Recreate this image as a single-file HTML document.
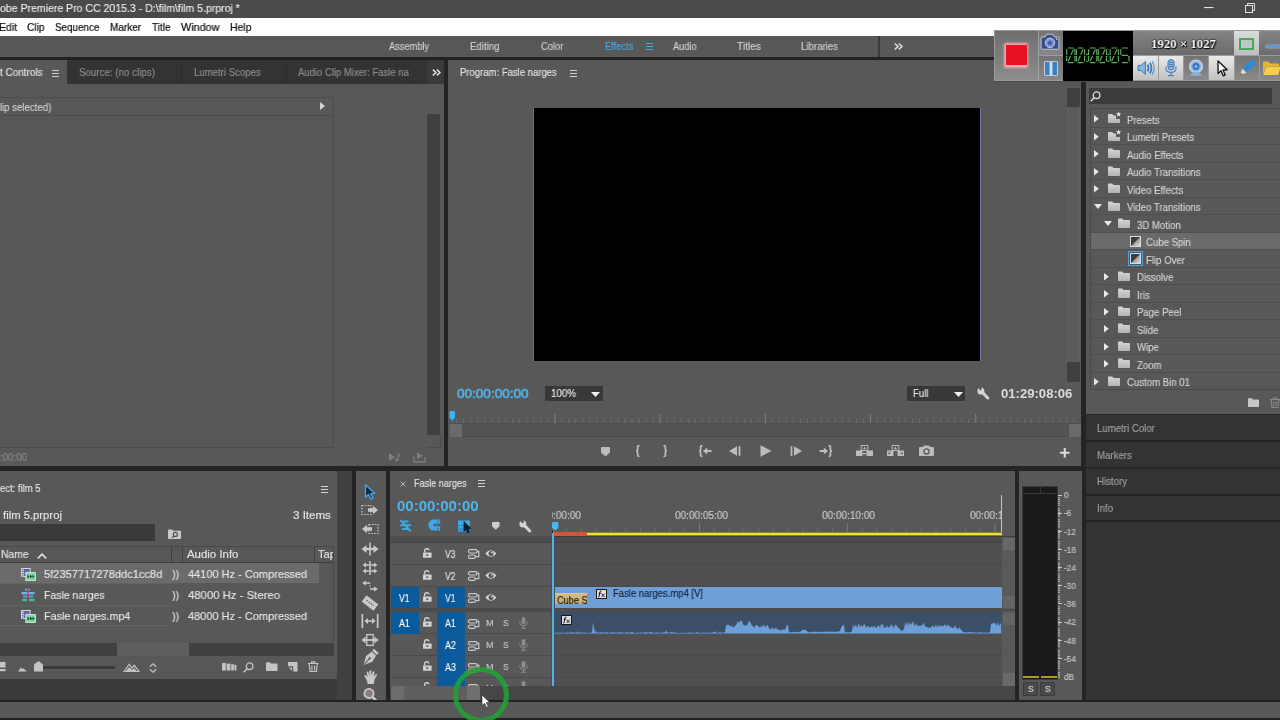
<!DOCTYPE html>
<html>
<head>
<meta charset="utf-8">
<title>Premiere</title>
<style>
html,body{margin:0;padding:0;}
body{width:1280px;height:720px;overflow:hidden;position:relative;background:#242424;font-family:"Liberation Sans",sans-serif;font-size:10px;color:#d4d4d4;}
div,svg{position:absolute;box-sizing:border-box;}
svg{overflow:visible;}
.t{white-space:pre;line-height:1;transform-origin:0 50%;will-change:transform;}
</style>
</head>
<body>
<svg width="0" height="0" style="left:0;top:0;"><defs><linearGradient id="fg" x1="0" y1="0" x2="0" y2="1"><stop offset="0" stop-color="#d6d6d6"/><stop offset="1" stop-color="#b4b4b4"/></linearGradient><linearGradient id="tg" x1="0" y1="0" x2="1" y2="1"><stop offset=".4" stop-color="#8a8a8a"/><stop offset="1" stop-color="#e0e0e0"/></linearGradient></defs></svg>
<div style="left:0px;top:0px;width:1280px;height:18px;background:#4b4a48;"></div>
<div class="t" style="left:-0.3px;top:2px;font-size:11px;line-height:12px;color:#ececec;transform:scaleX(0.957);-webkit-text-stroke:0.15px #ececec;">obe Premiere Pro CC 2015.3 - D:\film\film 5.prproj *</div>
<svg style="left:1204px;top:7px;" width="9.5" height="2" viewBox="0 0 9.5 2"><rect width="9.5" height="1.1" fill="#e4e4e4"/></svg>
<svg style="left:1244.5px;top:2.7px;" width="10" height="10" viewBox="0 0 10 10"><rect x="0.5" y="2.5" width="7" height="7" fill="none" stroke="#e0e0e0" stroke-width="1"/><path d="M2.5 2.5V0.5H9.5V7.5H7.5" fill="none" stroke="#e0e0e0" stroke-width="1"/></svg>
<div style="left:0px;top:18px;width:1280px;height:18px;background:#ffffff;"></div>
<div class="t" style="left:-1.2px;top:21px;font-size:11px;line-height:12px;color:#0c0c0c;transform:scaleX(0.955);-webkit-text-stroke:0.2px #0c0c0c;">Edit</div>
<div class="t" style="left:27px;top:21px;font-size:11px;line-height:12px;color:#0c0c0c;transform:scaleX(0.924);-webkit-text-stroke:0.2px #0c0c0c;">Clip</div>
<div class="t" style="left:55.2px;top:21px;font-size:11px;line-height:12px;color:#0c0c0c;transform:scaleX(0.894);-webkit-text-stroke:0.2px #0c0c0c;">Sequence</div>
<div class="t" style="left:109.7px;top:21px;font-size:11px;line-height:12px;color:#0c0c0c;transform:scaleX(0.909);-webkit-text-stroke:0.2px #0c0c0c;">Marker</div>
<div class="t" style="left:152px;top:21px;font-size:11px;line-height:12px;color:#0c0c0c;transform:scaleX(0.913);-webkit-text-stroke:0.2px #0c0c0c;">Title</div>
<div class="t" style="left:181.4px;top:21px;font-size:11px;line-height:12px;color:#0c0c0c;transform:scaleX(0.982);-webkit-text-stroke:0.2px #0c0c0c;">Window</div>
<div class="t" style="left:230px;top:21px;font-size:11px;line-height:12px;color:#0c0c0c;transform:scaleX(0.95);-webkit-text-stroke:0.2px #0c0c0c;">Help</div>
<div style="left:0px;top:36px;width:1280px;height:21px;background:#585858;"></div>
<div style="left:0px;top:57px;width:1280px;height:3px;background:#222222;"></div>
<div class="t" style="left:388.7px;top:41px;font-size:10.3px;line-height:11px;color:#d0d0d0;transform:scaleX(0.896);-webkit-text-stroke:0.15px #d0d0d0;">Assembly</div>
<div class="t" style="left:469.5px;top:41px;font-size:10.3px;line-height:11px;color:#d0d0d0;transform:scaleX(0.937);-webkit-text-stroke:0.15px #d0d0d0;">Editing</div>
<div class="t" style="left:540.7px;top:41px;font-size:10.3px;line-height:11px;color:#d0d0d0;transform:scaleX(0.902);-webkit-text-stroke:0.15px #d0d0d0;">Color</div>
<div class="t" style="left:604.5px;top:41px;font-size:10.3px;line-height:11px;color:#4da6dc;transform:scaleX(0.901);-webkit-text-stroke:0.15px #4da6dc;">Effects</div>
<div class="t" style="left:672.5px;top:41px;font-size:10.3px;line-height:11px;color:#d0d0d0;transform:scaleX(0.9);-webkit-text-stroke:0.15px #d0d0d0;">Audio</div>
<div class="t" style="left:737px;top:41px;font-size:10.3px;line-height:11px;color:#d0d0d0;transform:scaleX(0.991);-webkit-text-stroke:0.15px #d0d0d0;">Titles</div>
<div class="t" style="left:800.5px;top:41px;font-size:10.3px;line-height:11px;color:#d0d0d0;transform:scaleX(0.937);-webkit-text-stroke:0.15px #d0d0d0;">Libraries</div>
<svg style="left:645.5px;top:43px;" width="7" height="8" viewBox="0 0 7 8"><path d="M0 .5H7M0 3.5H7M0 6.5H7" stroke="#4da6dc" stroke-width="1"/></svg>
<div style="left:878.4px;top:36px;width:1.6px;height:21px;background:#3c3c3c;"></div>
<svg style="left:893.6px;top:42.6px;" width="9" height="7" viewBox="0 0 9 7"><path d="M.8 .6L4 3.5L.8 6.4M4.8 .6L8 3.5L4.8 6.4" fill="none" stroke="#dcdcdc" stroke-width="1.5"/></svg>
<div style="left:0px;top:60px;width:444px;height:406px;background:#585858;"></div>
<div style="left:67px;top:60px;width:360px;height:24px;background:#333333;border-top-left-radius:2px;"></div>
<div style="left:427px;top:60px;width:17px;height:24px;background:#3a3a3a;"></div>
<div style="left:286px;top:61px;width:1px;height:23px;background:#2c2c2c;"></div>
<div style="left:181px;top:61px;width:1px;height:23px;background:#2c2c2c;"></div>
<div style="left:409px;top:61px;width:1px;height:23px;background:#2c2c2c;"></div>
<div class="t" style="left:0px;top:67px;font-size:10.3px;line-height:11px;color:#e2e2e2;transform:scaleX(0.964);-webkit-text-stroke:0.15px #e2e2e2;">t Controls</div>
<svg style="left:52px;top:69.5px;" width="7" height="8" viewBox="0 0 7 8"><path d="M0 .5H7M0 3.5H7M0 6.5H7" stroke="#d0d0d0" stroke-width="1"/></svg>
<div class="t" style="left:79px;top:67px;font-size:10.3px;line-height:11px;color:#8e8e8e;transform:scaleX(0.947);-webkit-text-stroke:0.15px #8e8e8e;">Source: (no clips)</div>
<div class="t" style="left:194px;top:67px;font-size:10.3px;line-height:11px;color:#8e8e8e;transform:scaleX(0.932);-webkit-text-stroke:0.15px #8e8e8e;">Lumetri Scopes</div>
<div class="t" style="left:298px;top:67px;font-size:10.3px;line-height:11px;color:#8e8e8e;transform:scaleX(0.922);-webkit-text-stroke:0.15px #8e8e8e;">Audio Clip Mixer: Fasle na</div>
<svg style="left:432px;top:69px;" width="9" height="7" viewBox="0 0 9 7"><path d="M.8 .6L4 3.5L.8 6.4M4.8 .6L8 3.5L4.8 6.4" fill="none" stroke="#dcdcdc" stroke-width="1.5"/></svg>
<div style="left:0px;top:97px;width:334px;height:1px;background:#4c4c4c;"></div>
<div style="left:0px;top:115px;width:334px;height:1px;background:#4c4c4c;"></div>
<div style="left:333px;top:97px;width:1px;height:351px;background:#4c4c4c;"></div>
<div style="left:0px;top:447px;width:334px;height:1px;background:#4c4c4c;"></div>
<div class="t" style="left:-5.3px;top:102px;font-size:10.3px;line-height:11px;color:#d2d2d2;transform:scaleX(0.937);-webkit-text-stroke:0.15px #d2d2d2;">clip selected)</div>
<svg style="left:320.3px;top:101.7px;" width="5" height="8" viewBox="0 0 5 8"><path d="M0 0L5 4L0 8Z" fill="#d6d6d6"/></svg>
<div style="left:427px;top:114px;width:13px;height:321px;background:#404040;"></div>
<div style="left:427px;top:435px;width:14px;height:13px;background:none;border-right:1px solid #4c4c4c;border-bottom:1px solid #4c4c4c;"></div>
<svg style="left:389px;top:452px;" width="13" height="10" viewBox="0 0 13 10"><path d="M0 1L6 5L0 9Z" fill="#7e7e7e"/><path d="M9 1.5V8" stroke="#7e7e7e" stroke-width="1.2"/><ellipse cx="7.6" cy="8" rx="1.8" ry="1.4" fill="#7e7e7e"/><path d="M9 1.5Q11.5 2.5 11 5" fill="none" stroke="#7e7e7e" stroke-width="1"/></svg>
<svg style="left:413px;top:452px;" width="13" height="11" viewBox="0 0 13 11"><path d="M1 4.5V10H12V5.5" fill="none" stroke="#7e7e7e" stroke-width="1.4"/><path d="M4 0.5L10 4L4 7Z" fill="#7e7e7e"/></svg>
<div class="t" style="left:0.3px;top:452px;font-size:10.3px;line-height:11px;color:#8c8c8c;transform:scaleX(0.943);-webkit-text-stroke:0.15px #8c8c8c;">:00:00</div>
<div style="left:444px;top:60px;width:4px;height:406px;background:#242424;"></div>
<div style="left:0px;top:466px;width:1086px;height:5px;background:#242424;"></div>
<div style="left:448px;top:60px;width:634px;height:406px;background:#585858;"></div>
<div class="t" style="left:459.7px;top:67px;font-size:10.3px;line-height:11px;color:#e2e2e2;transform:scaleX(0.924);-webkit-text-stroke:0.15px #e2e2e2;">Program: Fasle narges</div>
<svg style="left:569.5px;top:69.5px;" width="7" height="8" viewBox="0 0 7 8"><path d="M0 .5H7M0 3.5H7M0 6.5H7" stroke="#d0d0d0" stroke-width="1"/></svg>
<div style="left:534px;top:108px;width:447px;height:253px;background:#000000;"></div>
<div style="left:533px;top:108px;width:1px;height:253px;background:#6f6f8e;"></div>
<div style="left:980px;top:108px;width:1px;height:253px;background:#7474a0;"></div>
<div style="left:1066.5px;top:88px;width:13.5px;height:294px;background:#5b5b5b;border:1px solid #626262;"></div>
<div style="left:1066.5px;top:88px;width:13.5px;height:18.5px;background:#404040;"></div>
<div style="left:1066.5px;top:362px;width:13.5px;height:20px;background:#404040;"></div>
<div class="t" style="left:456.9px;top:386px;font-size:13.55px;line-height:15px;color:#4fb4ea;-webkit-text-stroke:0.6px #4fb4ea;">00:00:00:00</div>
<div style="left:545px;top:386px;width:58px;height:15px;background:#383838;"></div>
<div class="t" style="left:551px;top:387px;font-size:10.8px;line-height:12px;color:#e6e6e6;transform:scaleX(0.905);-webkit-text-stroke:0.15px #e6e6e6;">100%</div>
<svg style="left:591px;top:392px;" width="9" height="5" viewBox="0 0 9 5"><path d="M0 0H9L4.5 5Z" fill="#f0f0f0"/></svg>
<div style="left:907px;top:386px;width:58px;height:15px;background:#383838;"></div>
<div class="t" style="left:913.4px;top:387px;font-size:10.8px;line-height:12px;color:#e6e6e6;transform:scaleX(0.896);-webkit-text-stroke:0.15px #e6e6e6;">Full</div>
<svg style="left:953.5px;top:392px;" width="9" height="5" viewBox="0 0 9 5"><path d="M0 0H9L4.5 5Z" fill="#f0f0f0"/></svg>
<svg style="left:976.6px;top:387px;" width="13" height="13" viewBox="0 0 13 13"><path d="M4.4 4.4L10.8 11" stroke="#d4d4d4" stroke-width="3" stroke-linecap="round"/><circle cx="3.9" cy="3.9" r="3.5" fill="#d4d4d4"/><path d="M3.6 3.6L.6 .2L3.2 -1.2L5 1.8Z" fill="#585858"/></svg>
<div class="t" style="left:1000.6px;top:386px;font-size:13.1px;line-height:15px;color:#dcdcdc;font-weight:bold;">01:29:08:06</div>
<svg style="left:449px;top:413px;" width="632" height="11" viewBox="0 0 632 11"><rect x="7.2" y="6" width="1" height="4" fill="#6e6e6e"/><rect x="14.2" y="6" width="1" height="4" fill="#6e6e6e"/><rect x="21.2" y="6" width="1" height="4" fill="#6e6e6e"/><rect x="28.2" y="6" width="1" height="4" fill="#6e6e6e"/><rect x="35.3" y="6" width="1" height="4" fill="#6e6e6e"/><rect x="42.3" y="6" width="1" height="4" fill="#6e6e6e"/><rect x="49.3" y="6" width="1" height="4" fill="#6e6e6e"/><rect x="56.3" y="6" width="1" height="4" fill="#6e6e6e"/><rect x="63.3" y="6" width="1" height="4" fill="#6e6e6e"/><rect x="70.3" y="6" width="1" height="4" fill="#6e6e6e"/><rect x="77.3" y="6" width="1" height="4" fill="#6e6e6e"/><rect x="84.3" y="6" width="1" height="4" fill="#6e6e6e"/><rect x="91.4" y="6" width="1" height="4" fill="#6e6e6e"/><rect x="98.4" y="6" width="1" height="4" fill="#6e6e6e"/><rect x="105.4" y="6" width="1" height="4" fill="#6e6e6e"/><rect x="112.4" y="6" width="1" height="4" fill="#6e6e6e"/><rect x="119.4" y="6" width="1" height="4" fill="#6e6e6e"/><rect x="126.4" y="6" width="1" height="4" fill="#6e6e6e"/><rect x="133.4" y="6" width="1" height="4" fill="#6e6e6e"/><rect x="140.4" y="6" width="1" height="4" fill="#6e6e6e"/><rect x="147.5" y="6" width="1" height="4" fill="#6e6e6e"/><rect x="154.5" y="6" width="1" height="4" fill="#6e6e6e"/><rect x="161.5" y="6" width="1" height="4" fill="#6e6e6e"/><rect x="168.5" y="6" width="1" height="4" fill="#6e6e6e"/><rect x="175.5" y="6" width="1" height="4" fill="#6e6e6e"/><rect x="182.5" y="6" width="1" height="4" fill="#6e6e6e"/><rect x="189.5" y="6" width="1" height="4" fill="#6e6e6e"/><rect x="196.6" y="6" width="1" height="4" fill="#6e6e6e"/><rect x="203.6" y="6" width="1" height="4" fill="#6e6e6e"/><rect x="210.6" y="6" width="1" height="4" fill="#6e6e6e"/><rect x="217.6" y="6" width="1" height="4" fill="#6e6e6e"/><rect x="224.6" y="6" width="1" height="4" fill="#6e6e6e"/><rect x="231.6" y="6" width="1" height="4" fill="#6e6e6e"/><rect x="238.6" y="6" width="1" height="4" fill="#6e6e6e"/><rect x="245.6" y="6" width="1" height="4" fill="#6e6e6e"/><rect x="252.7" y="6" width="1" height="4" fill="#6e6e6e"/><rect x="259.7" y="6" width="1" height="4" fill="#6e6e6e"/><rect x="266.7" y="6" width="1" height="4" fill="#6e6e6e"/><rect x="273.7" y="6" width="1" height="4" fill="#6e6e6e"/><rect x="280.7" y="6" width="1" height="4" fill="#6e6e6e"/><rect x="287.7" y="6" width="1" height="4" fill="#6e6e6e"/><rect x="294.7" y="6" width="1" height="4" fill="#6e6e6e"/><rect x="301.7" y="6" width="1" height="4" fill="#6e6e6e"/><rect x="308.8" y="6" width="1" height="4" fill="#6e6e6e"/><rect x="315.8" y="6" width="1" height="4" fill="#6e6e6e"/><rect x="322.8" y="6" width="1" height="4" fill="#6e6e6e"/><rect x="329.8" y="6" width="1" height="4" fill="#6e6e6e"/><rect x="336.8" y="6" width="1" height="4" fill="#6e6e6e"/><rect x="343.8" y="6" width="1" height="4" fill="#6e6e6e"/><rect x="350.8" y="6" width="1" height="4" fill="#6e6e6e"/><rect x="357.9" y="6" width="1" height="4" fill="#6e6e6e"/><rect x="364.9" y="6" width="1" height="4" fill="#6e6e6e"/><rect x="371.9" y="6" width="1" height="4" fill="#6e6e6e"/><rect x="378.9" y="6" width="1" height="4" fill="#6e6e6e"/><rect x="385.9" y="6" width="1" height="4" fill="#6e6e6e"/><rect x="392.9" y="6" width="1" height="4" fill="#6e6e6e"/><rect x="399.9" y="6" width="1" height="4" fill="#6e6e6e"/><rect x="406.9" y="6" width="1" height="4" fill="#6e6e6e"/><rect x="414.0" y="6" width="1" height="4" fill="#6e6e6e"/><rect x="421.0" y="6" width="1" height="4" fill="#6e6e6e"/><rect x="428.0" y="6" width="1" height="4" fill="#6e6e6e"/><rect x="435.0" y="6" width="1" height="4" fill="#6e6e6e"/><rect x="442.0" y="6" width="1" height="4" fill="#6e6e6e"/><rect x="449.0" y="6" width="1" height="4" fill="#6e6e6e"/><rect x="456.0" y="6" width="1" height="4" fill="#6e6e6e"/><rect x="463.0" y="6" width="1" height="4" fill="#6e6e6e"/><rect x="470.1" y="6" width="1" height="4" fill="#6e6e6e"/><rect x="477.1" y="6" width="1" height="4" fill="#6e6e6e"/><rect x="484.1" y="6" width="1" height="4" fill="#6e6e6e"/><rect x="491.1" y="6" width="1" height="4" fill="#6e6e6e"/><rect x="498.1" y="6" width="1" height="4" fill="#6e6e6e"/><rect x="505.1" y="6" width="1" height="4" fill="#6e6e6e"/><rect x="512.1" y="6" width="1" height="4" fill="#6e6e6e"/><rect x="519.1" y="6" width="1" height="4" fill="#6e6e6e"/><rect x="526.2" y="6" width="1" height="4" fill="#6e6e6e"/><rect x="533.2" y="6" width="1" height="4" fill="#6e6e6e"/><rect x="540.2" y="6" width="1" height="4" fill="#6e6e6e"/><rect x="547.2" y="6" width="1" height="4" fill="#6e6e6e"/><rect x="554.2" y="6" width="1" height="4" fill="#6e6e6e"/><rect x="561.2" y="6" width="1" height="4" fill="#6e6e6e"/><rect x="568.2" y="6" width="1" height="4" fill="#6e6e6e"/><rect x="575.3" y="6" width="1" height="4" fill="#6e6e6e"/><rect x="582.3" y="6" width="1" height="4" fill="#6e6e6e"/><rect x="589.3" y="6" width="1" height="4" fill="#6e6e6e"/><rect x="596.3" y="6" width="1" height="4" fill="#6e6e6e"/><rect x="603.3" y="6" width="1" height="4" fill="#6e6e6e"/><rect x="610.3" y="6" width="1" height="4" fill="#6e6e6e"/><rect x="617.3" y="6" width="1" height="4" fill="#6e6e6e"/><rect x="624.3" y="6" width="1" height="4" fill="#6e6e6e"/><rect x="105.4" y="1" width="1" height="9" fill="#7e7e7e"/><rect x="210.6" y="1" width="1" height="9" fill="#7e7e7e"/><rect x="315.8" y="1" width="1" height="9" fill="#7e7e7e"/><rect x="421.0" y="1" width="1" height="9" fill="#7e7e7e"/><rect x="526.2" y="1" width="1" height="9" fill="#7e7e7e"/><rect x="0" y="10" width="632" height="1" fill="#4e4e4e"/></svg>
<svg style="left:449px;top:411px;" width="7" height="11" viewBox="0 0 7 11"><path d="M0.5 0.8Q0.5 0 1.3 0H5.2Q6 0 6 .8V7L3.2 9.6L0.5 7Z" fill="#3fb0f0"/><rect x="2.7" y="8" width="1" height="3" fill="#2a90d0"/></svg>
<div style="left:450px;top:424px;width:631px;height:13px;background:#545454;border-bottom:1px solid #4a4a4a;"></div>
<div style="left:450px;top:424px;width:12px;height:13px;background:#6a6a6a;"></div>
<div style="left:1069px;top:424px;width:12px;height:13px;background:#6a6a6a;"></div>
<svg style="left:600.5px;top:446.5px;" width="9" height="10" viewBox="0 0 9 10"><path d="M0 1Q0 0 1 0H8Q9 0 9 1V5.5L4.5 9.6L0 5.5Z" fill="#bcbcbc"/></svg>
<svg style="left:634.5px;top:445px;" width="5" height="12" viewBox="0 0 5 12"><path d="M4.5 .6Q2.6 .6 2.6 2V4.6Q2.6 6 1 6Q2.6 6 2.6 7.4V10Q2.6 11.4 4.5 11.4" fill="none" stroke="#bcbcbc" stroke-width="1.7"/></svg>
<svg style="left:662.5px;top:445px;" width="5" height="12" viewBox="0 0 5 12"><path d="M.5 .6Q2.4 .6 2.4 2V4.6Q2.4 6 4 6Q2.4 6 2.4 7.4V10Q2.4 11.4 .5 11.4" fill="none" stroke="#bcbcbc" stroke-width="1.7"/></svg>
<svg style="left:698px;top:445px;" width="14" height="12" viewBox="0 0 14 12"><path d="M4.5 .6Q2.6 .6 2.6 2V4.6Q2.6 6 1 6Q2.6 6 2.6 7.4V10Q2.6 11.4 4.5 11.4" fill="none" stroke="#bcbcbc" stroke-width="1.7"/><path d="M5 6L9.2 2.4V4.9H13.5V7.1H9.2V9.6Z" fill="#bcbcbc"/></svg>
<svg style="left:729px;top:445px;" width="13" height="12" viewBox="0 0 13 12"><path d="M0 6L8 1.2V10.8Z" fill="#bcbcbc"/><rect x="9.6" y="1.2" width="1.8" height="9.6" fill="#bcbcbc"/></svg>
<svg style="left:760px;top:445px;" width="12" height="12" viewBox="0 0 12 12"><path d="M0.5 0.3L11.5 6L0.5 11.7Z" fill="#bcbcbc"/></svg>
<svg style="left:790px;top:445px;" width="13" height="12" viewBox="0 0 13 12"><rect x="0.6" y="1.2" width="1.8" height="9.6" fill="#bcbcbc"/><path d="M12 6L4 1.2V10.8Z" fill="#bcbcbc"/></svg>
<svg style="left:819px;top:445px;" width="14" height="12" viewBox="0 0 14 12"><path d="M9.5 .6Q11.4 .6 11.4 2V4.6Q11.4 6 13 6Q11.4 6 11.4 7.4V10Q11.4 11.4 9.5 11.4" fill="none" stroke="#bcbcbc" stroke-width="1.7"/><path d="M9 6L4.8 2.4V4.9H.5V7.1H4.8V9.6Z" fill="#bcbcbc"/></svg>
<svg style="left:856px;top:445px;" width="17" height="12" viewBox="0 0 17 12"><rect x="0" y="5.5" width="6.5" height="5.5" fill="#bcbcbc"/><rect x="10.5" y="5.5" width="6.5" height="5.5" fill="#bcbcbc"/><rect x="5.2" y="0.5" width="6.6" height="5" fill="none" stroke="#bcbcbc" stroke-width="1"/><path d="M6.8 4.3L8.5 1.8L10.2 4.3Z" fill="#bcbcbc"/><rect x="6.5" y="8" width="4" height="1.2" fill="#bcbcbc"/></svg>
<svg style="left:887px;top:445px;" width="17" height="12" viewBox="0 0 17 12"><rect x="0" y="5.5" width="6.5" height="5.5" fill="#bcbcbc"/><rect x="10.5" y="5.5" width="6.5" height="5.5" fill="#bcbcbc"/><rect x="5.2" y="0.5" width="6.6" height="5" fill="none" stroke="#bcbcbc" stroke-width="1"/><path d="M6.8 4.3L8.5 1.8L10.2 4.3Z" fill="#bcbcbc"/><path d="M1.5 7L3.8 8.3L1.5 9.6ZM15.5 7L13.2 8.3L15.5 9.6Z" fill="#585858"/></svg>
<svg style="left:918.5px;top:445px;" width="15" height="12" viewBox="0 0 15 12"><path d="M0 3Q0 2 1 2H3.6L4.8 .4H10.2L11.4 2H14Q15 2 15 3V10Q15 11 14 11H1Q0 11 0 10Z" fill="#bcbcbc"/><circle cx="7.5" cy="6.4" r="2.6" fill="none" stroke="#585858" stroke-width="1.3"/></svg>
<svg style="left:1060px;top:447.8px;" width="9.5" height="9.5" viewBox="0 0 9.5 9.5"><path d="M4.75 0V9.5M0 4.75H9.5" stroke="#dadada" stroke-width="2.1"/></svg>
<div style="left:1081.3px;top:60px;width:4.6px;height:640px;background:#242424;"></div>
<div style="left:1086px;top:60px;width:194px;height:354px;background:#585858;"></div>
<div style="left:1089px;top:88px;width:183px;height:16px;background:#3b3b3b;"></div>
<svg style="left:1090px;top:91px;" width="11" height="11" viewBox="0 0 11 11"><circle cx="6.6" cy="4.2" r="3.3" fill="none" stroke="#d8d8d8" stroke-width="1.3"/><path d="M4.2 6.6L0.8 10.2" stroke="#d8d8d8" stroke-width="1.5"/></svg>
<div style="left:1090px;top:108px;width:190px;height:282px;background:none;border:1px solid #4a4a4a;border-right:none;"></div>
<svg style="left:1094.3px;top:115.1px;" width="5" height="8" viewBox="0 0 5 8"><path d="M0 0L4.8 3.7L0 7.4Z" fill="#e8e8e8"/></svg>
<svg style="left:1108px;top:113.4px;" width="12.5" height="11" viewBox="0 0 12.5 11"><path d="M0 1.8Q0 1 .8 1H4.2L5.6 2.6H8V6H12V9.2Q12 10 11.2 10H.8Q0 10 0 9.2Z" fill="url(#fg)"/><path d="M10.6 -1.6L11.3 .3L13.3 .4L11.7 1.6L12.3 3.6L10.6 2.4L8.9 3.6L9.5 1.6L7.9 .4L9.9 .3Z" fill="#f0f0f0"/></svg>
<div class="t" style="left:1126.7px;top:115px;font-size:10.3px;line-height:11px;color:#d4d4d4;transform:scaleX(0.932);-webkit-text-stroke:0.15px #d4d4d4;">Presets</div>
<div style="left:1091px;top:127px;width:189px;height:1px;background:#4e4e4e;"></div>
<svg style="left:1094.3px;top:132.60000000000002px;" width="5" height="8" viewBox="0 0 5 8"><path d="M0 0L4.8 3.7L0 7.4Z" fill="#e8e8e8"/></svg>
<svg style="left:1108px;top:130.9px;" width="12.5" height="11" viewBox="0 0 12.5 11"><path d="M0 1.8Q0 1 .8 1H4.2L5.6 2.6H8V6H12V9.2Q12 10 11.2 10H.8Q0 10 0 9.2Z" fill="url(#fg)"/><path d="M10.6 -1.6L11.3 .3L13.3 .4L11.7 1.6L12.3 3.6L10.6 2.4L8.9 3.6L9.5 1.6L7.9 .4L9.9 .3Z" fill="#f0f0f0"/></svg>
<div class="t" style="left:1126.7px;top:132px;font-size:10.3px;line-height:11px;color:#d4d4d4;transform:scaleX(0.932);-webkit-text-stroke:0.15px #d4d4d4;">Lumetri Presets</div>
<div style="left:1091px;top:144px;width:189px;height:1px;background:#4e4e4e;"></div>
<svg style="left:1094.3px;top:150.1px;" width="5" height="8" viewBox="0 0 5 8"><path d="M0 0L4.8 3.7L0 7.4Z" fill="#e8e8e8"/></svg>
<svg style="left:1108px;top:148.39999999999998px;" width="12.5" height="11" viewBox="0 0 12.5 11"><path d="M0 1.2Q0 .4 .8 .4H4.2L5.6 2H11.2Q12 2 12 2.8V9.2Q12 10 11.2 10H.8Q0 10 0 9.2Z" fill="url(#fg)"/></svg>
<div class="t" style="left:1126.7px;top:150px;font-size:10.3px;line-height:11px;color:#d4d4d4;transform:scaleX(0.932);-webkit-text-stroke:0.15px #d4d4d4;">Audio Effects</div>
<div style="left:1091px;top:162px;width:189px;height:1px;background:#4e4e4e;"></div>
<svg style="left:1094.3px;top:167.6px;" width="5" height="8" viewBox="0 0 5 8"><path d="M0 0L4.8 3.7L0 7.4Z" fill="#e8e8e8"/></svg>
<svg style="left:1108px;top:165.89999999999998px;" width="12.5" height="11" viewBox="0 0 12.5 11"><path d="M0 1.2Q0 .4 .8 .4H4.2L5.6 2H11.2Q12 2 12 2.8V9.2Q12 10 11.2 10H.8Q0 10 0 9.2Z" fill="url(#fg)"/></svg>
<div class="t" style="left:1126.7px;top:167px;font-size:10.3px;line-height:11px;color:#d4d4d4;transform:scaleX(0.932);-webkit-text-stroke:0.15px #d4d4d4;">Audio Transitions</div>
<div style="left:1091px;top:179px;width:189px;height:1px;background:#4e4e4e;"></div>
<svg style="left:1094.3px;top:185.1px;" width="5" height="8" viewBox="0 0 5 8"><path d="M0 0L4.8 3.7L0 7.4Z" fill="#e8e8e8"/></svg>
<svg style="left:1108px;top:183.39999999999998px;" width="12.5" height="11" viewBox="0 0 12.5 11"><path d="M0 1.2Q0 .4 .8 .4H4.2L5.6 2H11.2Q12 2 12 2.8V9.2Q12 10 11.2 10H.8Q0 10 0 9.2Z" fill="url(#fg)"/></svg>
<div class="t" style="left:1126.7px;top:185px;font-size:10.3px;line-height:11px;color:#d4d4d4;transform:scaleX(0.932);-webkit-text-stroke:0.15px #d4d4d4;">Video Effects</div>
<div style="left:1091px;top:197px;width:189px;height:1px;background:#4e4e4e;"></div>
<svg style="left:1094.3px;top:203.79999999999998px;" width="8" height="5" viewBox="0 0 8 5"><path d="M0 0H8L4 5Z" fill="#e8e8e8"/></svg>
<svg style="left:1108px;top:200.89999999999998px;" width="12.5" height="11" viewBox="0 0 12.5 11"><path d="M0 1.2Q0 .4 .8 .4H4.2L5.6 2H11.2Q12 2 12 2.8V9.2Q12 10 11.2 10H.8Q0 10 0 9.2Z" fill="url(#fg)"/></svg>
<div class="t" style="left:1126.7px;top:202px;font-size:10.3px;line-height:11px;color:#d4d4d4;transform:scaleX(0.932);-webkit-text-stroke:0.15px #d4d4d4;">Video Transitions</div>
<div style="left:1091px;top:214px;width:189px;height:1px;background:#4e4e4e;"></div>
<svg style="left:1104.3px;top:221.29999999999998px;" width="8" height="5" viewBox="0 0 8 5"><path d="M0 0H8L4 5Z" fill="#e8e8e8"/></svg>
<svg style="left:1118px;top:218.39999999999998px;" width="12.5" height="11" viewBox="0 0 12.5 11"><path d="M0 1.2Q0 .4 .8 .4H4.2L5.6 2H11.2Q12 2 12 2.8V9.2Q12 10 11.2 10H.8Q0 10 0 9.2Z" fill="url(#fg)"/></svg>
<div class="t" style="left:1136.7px;top:220px;font-size:10.3px;line-height:11px;color:#d4d4d4;transform:scaleX(0.932);-webkit-text-stroke:0.15px #d4d4d4;">3D Motion</div>
<div style="left:1091px;top:232px;width:189px;height:18px;background:#6a6a6a;"></div>
<div style="left:1091px;top:232px;width:189px;height:1px;background:#4e4e4e;"></div>
<svg style="left:1129.5px;top:235.79999999999998px;" width="11" height="11" viewBox="0 0 11 11"><rect x=".5" y=".5" width="10" height="10" fill="#3c3c3c" stroke="#dcdcdc" stroke-width="1"/><path d="M1 10L10 1V10Z" fill="url(#tg)"/></svg>
<div class="t" style="left:1145.7px;top:237px;font-size:10.3px;line-height:11px;color:#d4d4d4;transform:scaleX(0.932);-webkit-text-stroke:0.15px #d4d4d4;">Cube Spin</div>
<div style="left:1091px;top:249px;width:189px;height:1px;background:#4e4e4e;"></div>
<div style="left:1127.5px;top:251.3px;width:15px;height:15px;background:#3d5a72;border:1px solid #56a5d8;"></div>
<svg style="left:1129.5px;top:253.3px;" width="11" height="11" viewBox="0 0 11 11"><rect x=".5" y=".5" width="10" height="10" fill="#3c3c3c" stroke="#dcdcdc" stroke-width="1"/><path d="M1 10L10 1V10Z" fill="url(#tg)"/></svg>
<div class="t" style="left:1145.7px;top:255px;font-size:10.3px;line-height:11px;color:#d4d4d4;transform:scaleX(0.932);-webkit-text-stroke:0.15px #d4d4d4;">Flip Over</div>
<div style="left:1091px;top:267px;width:189px;height:1px;background:#4e4e4e;"></div>
<svg style="left:1104.3px;top:272.6px;" width="5" height="8" viewBox="0 0 5 8"><path d="M0 0L4.8 3.7L0 7.4Z" fill="#e8e8e8"/></svg>
<svg style="left:1118px;top:270.9px;" width="12.5" height="11" viewBox="0 0 12.5 11"><path d="M0 1.2Q0 .4 .8 .4H4.2L5.6 2H11.2Q12 2 12 2.8V9.2Q12 10 11.2 10H.8Q0 10 0 9.2Z" fill="url(#fg)"/></svg>
<div class="t" style="left:1136.7px;top:272px;font-size:10.3px;line-height:11px;color:#d4d4d4;transform:scaleX(0.932);-webkit-text-stroke:0.15px #d4d4d4;">Dissolve</div>
<div style="left:1091px;top:284px;width:189px;height:1px;background:#4e4e4e;"></div>
<svg style="left:1104.3px;top:290.1px;" width="5" height="8" viewBox="0 0 5 8"><path d="M0 0L4.8 3.7L0 7.4Z" fill="#e8e8e8"/></svg>
<svg style="left:1118px;top:288.4px;" width="12.5" height="11" viewBox="0 0 12.5 11"><path d="M0 1.2Q0 .4 .8 .4H4.2L5.6 2H11.2Q12 2 12 2.8V9.2Q12 10 11.2 10H.8Q0 10 0 9.2Z" fill="url(#fg)"/></svg>
<div class="t" style="left:1136.7px;top:290px;font-size:10.3px;line-height:11px;color:#d4d4d4;transform:scaleX(0.932);-webkit-text-stroke:0.15px #d4d4d4;">Iris</div>
<div style="left:1091px;top:302px;width:189px;height:1px;background:#4e4e4e;"></div>
<svg style="left:1104.3px;top:307.6px;" width="5" height="8" viewBox="0 0 5 8"><path d="M0 0L4.8 3.7L0 7.4Z" fill="#e8e8e8"/></svg>
<svg style="left:1118px;top:305.9px;" width="12.5" height="11" viewBox="0 0 12.5 11"><path d="M0 1.2Q0 .4 .8 .4H4.2L5.6 2H11.2Q12 2 12 2.8V9.2Q12 10 11.2 10H.8Q0 10 0 9.2Z" fill="url(#fg)"/></svg>
<div class="t" style="left:1136.7px;top:307px;font-size:10.3px;line-height:11px;color:#d4d4d4;transform:scaleX(0.932);-webkit-text-stroke:0.15px #d4d4d4;">Page Peel</div>
<div style="left:1091px;top:319px;width:189px;height:1px;background:#4e4e4e;"></div>
<svg style="left:1104.3px;top:325.1px;" width="5" height="8" viewBox="0 0 5 8"><path d="M0 0L4.8 3.7L0 7.4Z" fill="#e8e8e8"/></svg>
<svg style="left:1118px;top:323.4px;" width="12.5" height="11" viewBox="0 0 12.5 11"><path d="M0 1.2Q0 .4 .8 .4H4.2L5.6 2H11.2Q12 2 12 2.8V9.2Q12 10 11.2 10H.8Q0 10 0 9.2Z" fill="url(#fg)"/></svg>
<div class="t" style="left:1136.7px;top:325px;font-size:10.3px;line-height:11px;color:#d4d4d4;transform:scaleX(0.932);-webkit-text-stroke:0.15px #d4d4d4;">Slide</div>
<div style="left:1091px;top:337px;width:189px;height:1px;background:#4e4e4e;"></div>
<svg style="left:1104.3px;top:342.6px;" width="5" height="8" viewBox="0 0 5 8"><path d="M0 0L4.8 3.7L0 7.4Z" fill="#e8e8e8"/></svg>
<svg style="left:1118px;top:340.9px;" width="12.5" height="11" viewBox="0 0 12.5 11"><path d="M0 1.2Q0 .4 .8 .4H4.2L5.6 2H11.2Q12 2 12 2.8V9.2Q12 10 11.2 10H.8Q0 10 0 9.2Z" fill="url(#fg)"/></svg>
<div class="t" style="left:1136.7px;top:342px;font-size:10.3px;line-height:11px;color:#d4d4d4;transform:scaleX(0.932);-webkit-text-stroke:0.15px #d4d4d4;">Wipe</div>
<div style="left:1091px;top:354px;width:189px;height:1px;background:#4e4e4e;"></div>
<svg style="left:1104.3px;top:360.1px;" width="5" height="8" viewBox="0 0 5 8"><path d="M0 0L4.8 3.7L0 7.4Z" fill="#e8e8e8"/></svg>
<svg style="left:1118px;top:358.4px;" width="12.5" height="11" viewBox="0 0 12.5 11"><path d="M0 1.2Q0 .4 .8 .4H4.2L5.6 2H11.2Q12 2 12 2.8V9.2Q12 10 11.2 10H.8Q0 10 0 9.2Z" fill="url(#fg)"/></svg>
<div class="t" style="left:1136.7px;top:360px;font-size:10.3px;line-height:11px;color:#d4d4d4;transform:scaleX(0.932);-webkit-text-stroke:0.15px #d4d4d4;">Zoom</div>
<div style="left:1091px;top:372px;width:189px;height:1px;background:#4e4e4e;"></div>
<svg style="left:1094.3px;top:377.6px;" width="5" height="8" viewBox="0 0 5 8"><path d="M0 0L4.8 3.7L0 7.4Z" fill="#e8e8e8"/></svg>
<svg style="left:1108px;top:375.9px;" width="12.5" height="11" viewBox="0 0 12.5 11"><path d="M0 1.2Q0 .4 .8 .4H4.2L5.6 2H11.2Q12 2 12 2.8V9.2Q12 10 11.2 10H.8Q0 10 0 9.2Z" fill="url(#fg)"/></svg>
<div class="t" style="left:1126.7px;top:377px;font-size:10.3px;line-height:11px;color:#d4d4d4;transform:scaleX(0.932);-webkit-text-stroke:0.15px #d4d4d4;">Custom Bin 01</div>
<svg style="left:1248px;top:398px;" width="11" height="9" viewBox="0 0 11 9"><path d="M0 1Q0 .2 .8 .2H3.8L5 1.6H10.2Q11 1.6 11 2.4V8.2Q11 9 10.2 9H.8Q0 9 0 8.2Z" fill="#c6c6c6"/></svg>
<svg style="left:1270px;top:397px;" width="10" height="11" viewBox="0 0 10 11"><path d="M0 2.5H10M3.5 2.5V1H6.5V2.5M1.2 2.5L2 10.5H8L8.8 2.5M3.8 4.5V9M6.2 4.5V9" fill="none" stroke="#8a8a8a" stroke-width="1.1"/></svg>
<div style="left:1086px;top:414px;width:194px;height:286px;background:#333333;"></div>
<div style="left:1086px;top:414px;width:194px;height:1px;background:#262626;"></div>
<div style="left:1086px;top:440px;width:194px;height:2px;background:#262626;"></div>
<div class="t" style="left:1096.7px;top:423px;font-size:10.3px;line-height:11px;color:#a0a0a0;transform:scaleX(0.937);-webkit-text-stroke:0.15px #a0a0a0;">Lumetri Color</div>
<div style="left:1086px;top:467px;width:194px;height:2px;background:#262626;"></div>
<div class="t" style="left:1096.7px;top:450px;font-size:10.3px;line-height:11px;color:#a0a0a0;transform:scaleX(0.937);-webkit-text-stroke:0.15px #a0a0a0;">Markers</div>
<div style="left:1086px;top:494px;width:194px;height:2px;background:#262626;"></div>
<div class="t" style="left:1096.7px;top:476px;font-size:10.3px;line-height:11px;color:#a0a0a0;transform:scaleX(0.937);-webkit-text-stroke:0.15px #a0a0a0;">History</div>
<div style="left:1086px;top:520px;width:194px;height:2px;background:#262626;"></div>
<div class="t" style="left:1096.7px;top:503px;font-size:10.3px;line-height:11px;color:#a0a0a0;transform:scaleX(0.937);-webkit-text-stroke:0.15px #a0a0a0;">Info</div>
<div style="left:0px;top:471px;width:337px;height:208px;background:#585858;"></div>
<div style="left:0px;top:679px;width:337px;height:21px;background:#3a3a3a;"></div>
<div style="left:337px;top:471px;width:15px;height:229px;background:#414141;"></div>
<div style="left:352px;top:471px;width:4px;height:229px;background:#242424;"></div>
<div class="t" style="left:-0.5px;top:483px;font-size:10.4px;line-height:11px;color:#e4e4e4;transform:scaleX(0.91);-webkit-text-stroke:0.15px #e4e4e4;">ect: film 5</div>
<svg style="left:321px;top:485.5px;" width="7" height="8" viewBox="0 0 7 8"><path d="M0 .5H7M0 3.5H7M0 6.5H7" stroke="#d0d0d0" stroke-width="1"/></svg>
<div class="t" style="left:2.6px;top:509px;font-size:11.2px;line-height:12px;color:#e4e4e4;transform:scaleX(1.008);-webkit-text-stroke:0.15px #e4e4e4;">film 5.prproj</div>
<div class="t" style="left:293.3px;top:509px;font-size:11.2px;line-height:12px;color:#e4e4e4;transform:scaleX(1.032);-webkit-text-stroke:0.15px #e4e4e4;">3 Items</div>
<div style="left:0px;top:524px;width:155px;height:17px;background:#3a3a3a;"></div>
<svg style="left:167.5px;top:528.5px;" width="13" height="10" viewBox="0 0 13 10"><path d="M0 1.2Q0 .4 .8 .4H4L5.2 1.8H12.2Q13 1.8 13 2.6V9.2Q13 10 12.2 10H.8Q0 10 0 9.2Z" fill="#c8c8c8"/><circle cx="7.4" cy="5.4" r="2" fill="none" stroke="#4a4a4a" stroke-width="1.1"/><path d="M5.9 6.9L4 8.8" stroke="#4a4a4a" stroke-width="1.2"/></svg>
<div style="left:0px;top:546px;width:334px;height:97px;background:#585858;"></div>
<div style="left:0px;top:545.5px;width:334px;height:17.5px;background:#585858;border-top:1px solid #494949;border-bottom:1px solid #3c3c3c;"></div>
<div style="left:171px;top:547px;width:1px;height:15px;background:#404040;"></div>
<div style="left:182px;top:547px;width:1px;height:15px;background:#404040;"></div>
<div style="left:314px;top:547px;width:1px;height:15px;background:#404040;"></div>
<div style="left:333px;top:546px;width:1px;height:97px;background:#484848;"></div>
<div class="t" style="left:1px;top:548px;font-size:11.2px;line-height:12px;color:#e4e4e4;transform:scaleX(0.927);-webkit-text-stroke:0.15px #e4e4e4;">Name</div>
<svg style="left:37px;top:553px;" width="10" height="6" viewBox="0 0 10 6"><path d="M.8 5.4L5 1.2L9.2 5.4" fill="none" stroke="#e0e0e0" stroke-width="1.6"/></svg>
<div class="t" style="left:187.2px;top:548px;font-size:11.2px;line-height:12px;color:#e4e4e4;transform:scaleX(1.021);-webkit-text-stroke:0.15px #e4e4e4;">Audio Info</div>
<div style="left:318.3px;top:547px;width:15px;height:15px;overflow:hidden;">
<div class="t" style="left:0px;top:1px;font-size:11.2px;line-height:12px;color:#e4e4e4;transform:scaleX(0.997);-webkit-text-stroke:0.15px #e4e4e4;">Tap</div>
</div>
<div style="left:0px;top:562.8px;width:319px;height:20.6px;background:#6b6b6b;"></div>
<div style="left:0px;top:583.4px;width:172px;height:1px;background:#626262;"></div>
<div style="left:0px;top:604.5px;width:172px;height:1px;background:#626262;"></div>
<div style="left:0px;top:625.4px;width:172px;height:1px;background:#626262;"></div>
<svg style="left:21px;top:568px;" width="15" height="13" viewBox="0 0 15 13"><rect x="0" y="0" width="9.6" height="9" fill="#d8d8e4"/><rect x="2.6" y="1" width="6" height="7" fill="#5a5a9c"/><path d="M.8 1.4H2M.8 3.6H2M.8 5.8H2M.8 8H2" stroke="#5a5a9c" stroke-width="1"/><path d="M3 3.2H8.4M3 5.6H8.4" stroke="#8a8ac0" stroke-width=".7"/><rect x="4.8" y="4.6" width="9.6" height="7.8" fill="#86d6a8" stroke="#d4f0e0" stroke-width=".8"/><path d="M6.4 6.4L8.6 8.5L6.4 10.6ZM9 6.4L11.2 8.5L9 10.6ZM11.5 6.4L13.5 8.5L11.5 10.6Z" fill="#0c5226"/></svg>
<svg style="left:21px;top:588px;" width="15" height="14" viewBox="0 0 15 14"><rect x="4" y="0.5" width="5" height="2.4" fill="#5aa0e0"/><rect x="0.5" y="4" width="13" height="2.4" fill="#7ab0e8"/><rect x="2" y="7.5" width="10" height="2" fill="#5aa0e0"/><rect x="1" y="10.8" width="5" height="2.4" fill="#3cc08a"/><rect x="8" y="10.8" width="5.5" height="2.4" fill="#3cc08a"/><rect x="6.3" y="0" width="1.2" height="14" fill="#c03030"/></svg>
<svg style="left:21px;top:610px;" width="15" height="13" viewBox="0 0 15 13"><rect x="0" y="0" width="9.6" height="9" fill="#d8d8e4"/><rect x="2.6" y="1" width="6" height="7" fill="#5a5a9c"/><path d="M.8 1.4H2M.8 3.6H2M.8 5.8H2M.8 8H2" stroke="#5a5a9c" stroke-width="1"/><path d="M3 3.2H8.4M3 5.6H8.4" stroke="#8a8ac0" stroke-width=".7"/><rect x="4.8" y="4.6" width="9.6" height="7.8" fill="#86d6a8" stroke="#d4f0e0" stroke-width=".8"/><path d="M6.4 6.4L8.6 8.5L6.4 10.6ZM9 6.4L11.2 8.5L9 10.6ZM11.5 6.4L13.5 8.5L11.5 10.6Z" fill="#0c5226"/></svg>
<div class="t" style="left:43.7px;top:567px;font-size:11.8px;line-height:14px;color:#e6e6e6;transform:scaleX(0.939);-webkit-text-stroke:0.15px #e6e6e6;">5f2357717278ddc1cc8d</div>
<div class="t" style="left:171.7px;top:567px;font-size:11.8px;line-height:14px;color:#e6e6e6;transform:scaleX(0.891);-webkit-text-stroke:0.15px #e6e6e6;">))</div>
<div class="t" style="left:187.5px;top:567px;font-size:11.8px;line-height:14px;color:#e6e6e6;transform:scaleX(0.932);-webkit-text-stroke:0.15px #e6e6e6;">44100 Hz - Compressed</div>
<div class="t" style="left:43.7px;top:588px;font-size:11.8px;line-height:14px;color:#e6e6e6;transform:scaleX(0.888);-webkit-text-stroke:0.15px #e6e6e6;">Fasle narges</div>
<div class="t" style="left:171.7px;top:588px;font-size:11.8px;line-height:14px;color:#e6e6e6;transform:scaleX(0.891);-webkit-text-stroke:0.15px #e6e6e6;">))</div>
<div class="t" style="left:187.5px;top:588px;font-size:11.8px;line-height:14px;color:#e6e6e6;transform:scaleX(0.961);-webkit-text-stroke:0.15px #e6e6e6;">48000 Hz - Stereo</div>
<div class="t" style="left:43.7px;top:609px;font-size:11.8px;line-height:14px;color:#e6e6e6;transform:scaleX(0.916);-webkit-text-stroke:0.15px #e6e6e6;">Fasle narges.mp4</div>
<div class="t" style="left:171.7px;top:609px;font-size:11.8px;line-height:14px;color:#e6e6e6;transform:scaleX(0.891);-webkit-text-stroke:0.15px #e6e6e6;">))</div>
<div class="t" style="left:187.5px;top:609px;font-size:11.8px;line-height:14px;color:#e6e6e6;transform:scaleX(0.932);-webkit-text-stroke:0.15px #e6e6e6;">48000 Hz - Compressed</div>
<div style="left:0px;top:642.5px;width:334px;height:13.5px;background:#404040;"></div>
<div style="left:117px;top:643px;width:72px;height:13px;background:#5e5e5e;"></div>
<svg style="left:0px;top:662px;" width="6" height="10" viewBox="0 0 6 10"><rect x="0" y="0" width="5.5" height="5.5" fill="#c4c4c4"/><rect x="0" y="7" width="5.5" height="2.2" fill="#c4c4c4"/></svg>
<svg style="left:17.5px;top:665.5px;" width="9" height="6" viewBox="0 0 9 6"><path d="M0 5.5L3 1.5L4.6 3.2L5.6 2.2L8.6 5.5Z" fill="#c4c4c4"/></svg>
<div style="left:43px;top:666px;width:72px;height:3px;background:#3a3a3a;"></div>
<svg style="left:34px;top:661px;" width="9" height="11" viewBox="0 0 9 11"><path d="M0 3.5L4.5 0L9 3.5V10.5H0Z" fill="#c4c4c4"/></svg>
<svg style="left:124px;top:662.5px;" width="15" height="9" viewBox="0 0 15 9"><path d="M0 8.5L5.2 1.2L8 5L10.2 2.2L15 8.5Z" fill="none" stroke="#c4c4c4" stroke-width="1.2"/><path d="M1.5 8.5L5.2 4L8 7L10.2 5L13 8.5Z" fill="#c4c4c4"/></svg>
<svg style="left:149px;top:662.5px;" width="8" height="10" viewBox="0 0 8 10"><path d="M.8 3.8L4 .8L7.2 3.8M.8 6.2L4 9.2L7.2 6.2" fill="none" stroke="#c4c4c4" stroke-width="1.2"/></svg>
<svg style="left:221.5px;top:663px;" width="15" height="8" viewBox="0 0 15 8"><rect x="0" y="0" width="3.8" height="7.5" fill="#c4c4c4"/><rect x="4.6" y="0.6" width="3.8" height="6.9" fill="#c4c4c4"/><rect x="9.2" y="1.2" width="2.6" height="6.3" fill="#c4c4c4"/><rect x="12.4" y="1.8" width="2" height="5.7" fill="#c4c4c4"/></svg>
<svg style="left:242.5px;top:661.5px;" width="11" height="11" viewBox="0 0 11 11"><circle cx="6.6" cy="4.2" r="3.3" fill="none" stroke="#c4c4c4" stroke-width="1.3"/><path d="M4.2 6.6L0.8 10.2" stroke="#c4c4c4" stroke-width="1.5"/></svg>
<svg style="left:265.8px;top:662px;" width="11.5" height="9" viewBox="0 0 11.5 9"><path d="M0 1Q0 .2 .8 .2H3.8L5 1.6H10.7Q11.5 1.6 11.5 2.4V8.2Q11.5 9 10.7 9H.8Q0 9 0 8.2Z" fill="#c4c4c4"/></svg>
<svg style="left:287.5px;top:662px;" width="10" height="9.5" viewBox="0 0 10 9.5"><path d="M0 0H9.5V9.5H5.2V4.3H0Z" fill="#c4c4c4"/><path d="M0.8 5.6L4 8.8V5.6Z" fill="#c4c4c4"/></svg>
<svg style="left:308px;top:661px;" width="10.5" height="11" viewBox="0 0 10.5 11"><path d="M0 2.5H10.5M3.6 2.5V.8H6.9V2.5M1.2 2.5L2 10.4H8.5L9.3 2.5M3.9 4.5V9M6.6 4.5V9" fill="none" stroke="#c4c4c4" stroke-width="1.15"/></svg>
<div style="left:356px;top:471px;width:30px;height:229px;background:#585858;"></div>
<div style="left:386px;top:471px;width:4px;height:229px;background:#242424;"></div>
<svg style="left:361.0px;top:483.5px;" width="18" height="16" viewBox="0 0 18 16"><path d="M4.5 0.8L4.5 13.2L7.6 10.4L9.8 15.2L12 14.2L9.8 9.6L13.8 9.4Z" fill="#10283c" stroke="#3fa9e6" stroke-width="1.3" stroke-linejoin="round"/></svg>
<svg style="left:361.0px;top:503.0px;" width="18" height="14" viewBox="0 0 18 14"><rect x="1" y="2.5" width="9" height="9" fill="none" stroke="#c8c8c8" stroke-width="1.2" stroke-dasharray="1.6 1.3"/><path d="M7 5.2H12V2.8L17 7L12 11.2V8.8H7Z" fill="#c8c8c8"/></svg>
<svg style="left:361.0px;top:522.3px;" width="18" height="14" viewBox="0 0 18 14"><rect x="8" y="2.5" width="9" height="9" fill="none" stroke="#c8c8c8" stroke-width="1.2" stroke-dasharray="1.6 1.3"/><path d="M11 5.2H6V2.8L1 7L6 11.2V8.8H11Z" fill="#c8c8c8"/></svg>
<svg style="left:361.0px;top:541.5px;" width="18" height="14" viewBox="0 0 18 14"><path d="M0.5 7L5.5 3V5.8H12.5V3L17.5 7L12.5 11V8.2H5.5V11Z" fill="#c8c8c8"/><rect x="8.2" y="0.5" width="1.6" height="13" fill="#c8c8c8"/><rect x="7" y="3" width="4" height="8" fill="#585858" opacity="0"/></svg>
<svg style="left:361.0px;top:560.5px;" width="18" height="14" viewBox="0 0 18 14"><path d="M1.5 4L5 1.6V3.2H8V4.8H5V6.4ZM16.5 4L13 1.6V3.2H10V4.8H13V6.4ZM1.5 10L5 7.6V9.2H8V10.8H5V12.4ZM16.5 10L13 7.6V9.2H10V10.8H13V12.4Z" fill="#c8c8c8"/><rect x="8.2" y="0" width="1.6" height="14" fill="#c8c8c8"/></svg>
<svg style="left:361.0px;top:579.0px;" width="18" height="14" viewBox="0 0 18 14"><path d="M1 4L5 1.4V3.2H9V4.8H5V6.6Z" fill="#c8c8c8"/><path d="M17 10L13 7.4V9.2H10V10.8H13V12.6Z" fill="#c8c8c8"/><path d="M8.5 3.5L10 12" stroke="#c8c8c8" stroke-width="1.2" stroke-dasharray="1.5 1.3"/></svg>
<svg style="left:361.0px;top:595.0px;" width="18" height="16" viewBox="0 0 18 16"><g transform="rotate(38 9 8)"><rect x="1.5" y="4" width="15" height="8" rx=".8" fill="#c8c8c8"/><path d="M4.5 8H13.5" stroke="#585858" stroke-width="1.1" stroke-dasharray="1.5 1.2"/></g></svg>
<svg style="left:361.0px;top:614.0px;" width="18" height="14" viewBox="0 0 18 14"><rect x="0.5" y="0" width="1.7" height="14" fill="#c8c8c8"/><rect x="15.8" y="0" width="1.7" height="14" fill="#c8c8c8"/><path d="M3.4 7L7 4V6.2H11V4L14.6 7L11 10V7.8H7V10Z" fill="#c8c8c8"/></svg>
<svg style="left:361.0px;top:632.7px;" width="18" height="14" viewBox="0 0 18 14"><path d="M0.5 7L4.6 3.4V5.9H6V8.1H4.6V10.6ZM17.5 7L13.4 3.4V5.9H12V8.1H13.4V10.6Z" fill="#c8c8c8"/><rect x="5.8" y="1.6" width="6.4" height="10.8" fill="none" stroke="#c8c8c8" stroke-width="1.3"/><rect x="5.8" y="6.1" width="6.4" height="1.8" fill="#c8c8c8"/></svg>
<svg style="left:361.0px;top:650.0px;" width="18" height="16" viewBox="0 0 18 16"><g transform="rotate(42 9 8) translate(0 -1.5) scale(1.12) translate(-1 0)"><path d="M6.2 0H11.8V2.4H6.2Z" fill="#c8c8c8"/><path d="M6.4 3.2H11.6L12.8 9.5L9 17L5.2 9.5Z" fill="#c8c8c8"/><path d="M9 16V9.8" stroke="#585858" stroke-width=".9"/><circle cx="9" cy="8.8" r="1.1" fill="#585858"/></g></svg>
<svg style="left:361.5px;top:670.0px;" width="17" height="15" viewBox="0 0 17 15"><path d="M4.4 9.6L2.4 6.4Q1.9 5.4 2.8 5Q3.6 4.7 4.2 5.6L5.4 7.3L4.6 2.6Q4.5 1.6 5.4 1.5Q6.3 1.4 6.5 2.4L7.3 6L7.4 1.3Q7.4 .3 8.4 .3Q9.3 .3 9.4 1.3L9.6 6L10.7 2Q11 1.1 11.9 1.3Q12.7 1.6 12.5 2.5L11.7 6.6L13.4 4.4Q14 3.7 14.7 4.2Q15.3 4.7 14.8 5.5L12.6 9.6Q12.2 11.2 12 14H5.6Q5.4 11.4 4.4 9.6Z" fill="#c8c8c8"/></svg>
<div style="left:356px;top:680px;width:30px;height:20px;overflow:hidden;">
<svg style="left:5.5px;top:6.5px;" width="18" height="16" viewBox="0 0 18 16"><circle cx="7" cy="6.4" r="4.6" fill="#8c7c7c" stroke="#c8c8c8" stroke-width="1.8"/><path d="M10.4 10L15.5 15" stroke="#c8c8c8" stroke-width="2.6"/></svg>
</div>
<div style="left:390px;top:471px;width:625px;height:229px;background:#585858;"></div>
<div style="left:1015px;top:471px;width:4px;height:229px;background:#242424;"></div>
<svg style="left:400px;top:481px;" width="6" height="6" viewBox="0 0 6 6"><path d="M.5 .5L5.5 5.5M5.5 .5L.5 5.5" stroke="#b0b0b0" stroke-width="1"/></svg>
<div class="t" style="left:414.2px;top:478px;font-size:10.3px;line-height:11px;color:#e4e4e4;transform:scaleX(0.882);-webkit-text-stroke:0.15px #e4e4e4;">Fasle narges</div>
<svg style="left:477.5px;top:480px;" width="7" height="8" viewBox="0 0 7 8"><path d="M0 .5H7M0 3.5H7M0 6.5H7" stroke="#d0d0d0" stroke-width="1"/></svg>
<div class="t" style="left:396.7px;top:497px;font-size:14.98px;line-height:17px;color:#4fb4ea;font-weight:bold;">00:00:00:00</div>
<svg style="left:399px;top:519.3px;" width="13" height="13" viewBox="0 0 13 13"><path d="M4 2.6H9.5M1.2 6.3H12M3 10H9.5" stroke="#3fa9e6" stroke-width="2"/><path d="M1.2 0.8L11.8 12.4" stroke="#3fa9e6" stroke-width="1.9"/></svg>
<svg style="left:428.2px;top:519.4px;" width="13" height="12" viewBox="0 0 13 12"><path d="M12.2 .4H6A5.6 5.6 0 0 0 6 11.6H12.2V7.6H6.4A1.7 1.7 0 0 1 6.4 4.4H12.2Z" fill="#3fa9e6"/><path d="M9.6 2.4H11M9.6 9.6H11" stroke="#1d5f88" stroke-width="1.2"/><rect x="6.2" y="5.3" width="4" height="1.4" fill="#2a7fb4"/></svg>
<svg style="left:458.3px;top:519.5px;" width="14" height="13" viewBox="0 0 14 13"><rect x="0" y=".6" width="12" height="11.4" fill="#2c86c0"/><rect x="0" y=".6" width="12" height="4.4" fill="#3fa9e6"/><rect x="0" y="5.8" width="5.4" height="2.6" fill="#3fa9e6"/><rect x="0" y="9.2" width="5.4" height="2.6" fill="#3394d0"/><path d="M6 1.6V11.2L8.2 9.3L9.7 12.8L11.3 12.1L9.8 8.7L12.7 8.5Z" fill="#0b1c2a" stroke="#0b1c2a" stroke-width=".7" stroke-linejoin="round"/></svg>
<svg style="left:491.5px;top:521px;" width="7.6" height="9" viewBox="0 0 7.6 9"><rect x="0" y="0" width="7.6" height="1" fill="#3a3a3a"/><path d="M0 1.5Q0 .8 .8 .8H6.8Q7.6 .8 7.6 1.5V5.2L3.8 8.8L0 5.2Z" fill="#cccccc"/></svg>
<svg style="left:518.6px;top:520px;" width="13" height="13" viewBox="0 0 13 13"><path d="M4.4 4.4L10.8 11" stroke="#d4d4d4" stroke-width="3" stroke-linecap="round"/><circle cx="3.9" cy="3.9" r="3.5" fill="#d4d4d4"/><path d="M3.6 3.6L.6 .2L3.2 -1.2L5 1.8Z" fill="#585858"/></svg>
<div style="left:390px;top:536px;width:612px;height:7px;background:#4c4c4c;"></div>
<div style="left:553px;top:543px;width:449px;height:143px;background:#505050;"></div>
<div style="left:390px;top:542px;width:612px;height:1px;background:#434343;"></div>
<div style="left:390px;top:564px;width:612px;height:1px;background:#4a4a4a;"></div>
<div style="left:390px;top:586px;width:612px;height:1px;background:#4a4a4a;"></div>
<div style="left:390px;top:608px;width:612px;height:1px;background:#4a4a4a;"></div>
<div style="left:390px;top:633px;width:612px;height:1px;background:#4a4a4a;"></div>
<div style="left:390px;top:655.2px;width:612px;height:1px;background:#4a4a4a;"></div>
<div style="left:390px;top:677.2px;width:612px;height:1px;background:#4a4a4a;"></div>
<div style="left:390px;top:609px;width:612px;height:3px;background:#4c4c4c;"></div>
<div style="left:551.5px;top:543px;width:1px;height:143px;background:#4a4a4a;"></div>
<svg style="left:423px;top:547.5px;" width="9" height="10" viewBox="0 0 9 10"><rect x="0" y="4.6" width="8.6" height="5.2" rx=".6" fill="#d2d2d2"/><path d="M1.6 4.6V2.8Q1.6 .7 3.8 .7Q5.7 .7 6 2.4" fill="none" stroke="#d2d2d2" stroke-width="1.4"/><rect x="3.3" y="6.3" width="2" height="1.6" fill="#585858"/></svg>
<div class="t" style="left:444.5px;top:548px;font-size:10.8px;line-height:12px;color:#e0e0e0;transform:scaleX(0.787);-webkit-text-stroke:0.15px #e0e0e0;">V3</div>
<svg style="left:468px;top:549.1px;" width="11.5" height="10" viewBox="0 0 11.5 10"><rect x=".6" y=".6" width="8.4" height="3.4" rx="1.2" fill="none" stroke="#cacaca" stroke-width="1.2"/><rect x=".6" y="6" width="6.6" height="3.4" rx="1.2" fill="none" stroke="#cacaca" stroke-width="1.2"/><path d="M9 2.3H10.8V7.7H7.2" fill="none" stroke="#cacaca" stroke-width="1.2"/></svg>
<svg style="left:484.6px;top:548.9px;" width="12" height="9" viewBox="0 0 12 9"><path d="M.3 4.5Q5.8 -2.2 11.5 4.5Q5.8 11.2 .3 4.5Z" fill="#d6d6d6"/><circle cx="6" cy="4.5" r="2.5" fill="#585858"/><circle cx="6.9" cy="3.6" r=".9" fill="#d6d6d6"/></svg>
<svg style="left:423px;top:569.5px;" width="9" height="10" viewBox="0 0 9 10"><rect x="0" y="4.6" width="8.6" height="5.2" rx=".6" fill="#d2d2d2"/><path d="M1.6 4.6V2.8Q1.6 .7 3.8 .7Q5.7 .7 6 2.4" fill="none" stroke="#d2d2d2" stroke-width="1.4"/><rect x="3.3" y="6.3" width="2" height="1.6" fill="#585858"/></svg>
<div class="t" style="left:444.5px;top:570px;font-size:10.8px;line-height:12px;color:#e0e0e0;transform:scaleX(0.787);-webkit-text-stroke:0.15px #e0e0e0;">V2</div>
<svg style="left:468px;top:571.1px;" width="11.5" height="10" viewBox="0 0 11.5 10"><rect x=".6" y=".6" width="8.4" height="3.4" rx="1.2" fill="none" stroke="#cacaca" stroke-width="1.2"/><rect x=".6" y="6" width="6.6" height="3.4" rx="1.2" fill="none" stroke="#cacaca" stroke-width="1.2"/><path d="M9 2.3H10.8V7.7H7.2" fill="none" stroke="#cacaca" stroke-width="1.2"/></svg>
<svg style="left:484.6px;top:570.9px;" width="12" height="9" viewBox="0 0 12 9"><path d="M.3 4.5Q5.8 -2.2 11.5 4.5Q5.8 11.2 .3 4.5Z" fill="#d6d6d6"/><circle cx="6" cy="4.5" r="2.5" fill="#585858"/><circle cx="6.9" cy="3.6" r=".9" fill="#d6d6d6"/></svg>
<div style="left:390.5px;top:586.5px;width:28.5px;height:21.5px;background:#0b5a9b;"></div>
<div style="left:436.5px;top:586.5px;width:28px;height:21.5px;background:#0b5a9b;"></div>
<div class="t" style="left:399.4px;top:592px;font-size:10.8px;line-height:12px;color:#ffffff;transform:scaleX(0.787);-webkit-text-stroke:0.15px #ffffff;">V1</div>
<svg style="left:423px;top:591.5px;" width="9" height="10" viewBox="0 0 9 10"><rect x="0" y="4.6" width="8.6" height="5.2" rx=".6" fill="#d2d2d2"/><path d="M1.6 4.6V2.8Q1.6 .7 3.8 .7Q5.7 .7 6 2.4" fill="none" stroke="#d2d2d2" stroke-width="1.4"/><rect x="3.3" y="6.3" width="2" height="1.6" fill="#585858"/></svg>
<div class="t" style="left:444.5px;top:592px;font-size:10.8px;line-height:12px;color:#f0f0f0;transform:scaleX(0.787);-webkit-text-stroke:0.15px #f0f0f0;">V1</div>
<svg style="left:468px;top:593.1px;" width="11.5" height="10" viewBox="0 0 11.5 10"><rect x=".6" y=".6" width="8.4" height="3.4" rx="1.2" fill="none" stroke="#cacaca" stroke-width="1.2"/><rect x=".6" y="6" width="6.6" height="3.4" rx="1.2" fill="none" stroke="#cacaca" stroke-width="1.2"/><path d="M9 2.3H10.8V7.7H7.2" fill="none" stroke="#cacaca" stroke-width="1.2"/></svg>
<svg style="left:484.6px;top:592.9px;" width="12" height="9" viewBox="0 0 12 9"><path d="M.3 4.5Q5.8 -2.2 11.5 4.5Q5.8 11.2 .3 4.5Z" fill="#d6d6d6"/><circle cx="6" cy="4.5" r="2.5" fill="#585858"/><circle cx="6.9" cy="3.6" r=".9" fill="#d6d6d6"/></svg>
<div style="left:436.5px;top:612px;width:28px;height:21.5px;background:#0b5a9b;"></div>
<div style="left:390.5px;top:612px;width:28.5px;height:21.5px;background:#0b5a9b;"></div>
<div class="t" style="left:399.2px;top:617px;font-size:10.8px;line-height:12px;color:#ffffff;transform:scaleX(0.818);-webkit-text-stroke:0.15px #ffffff;">A1</div>
<svg style="left:423px;top:617px;" width="9" height="10" viewBox="0 0 9 10"><rect x="0" y="4.6" width="8.6" height="5.2" rx=".6" fill="#d2d2d2"/><path d="M1.6 4.6V2.8Q1.6 .7 3.8 .7Q5.7 .7 6 2.4" fill="none" stroke="#d2d2d2" stroke-width="1.4"/><rect x="3.3" y="6.3" width="2" height="1.6" fill="#585858"/></svg>
<div class="t" style="left:444.5px;top:617px;font-size:10.8px;line-height:12px;color:#f4f4f4;transform:scaleX(0.818);-webkit-text-stroke:0.15px #f4f4f4;">A1</div>
<svg style="left:468px;top:618.6px;" width="11.5" height="10" viewBox="0 0 11.5 10"><rect x=".6" y=".6" width="8.4" height="3.4" rx="1.2" fill="none" stroke="#cacaca" stroke-width="1.2"/><rect x=".6" y="6" width="6.6" height="3.4" rx="1.2" fill="none" stroke="#cacaca" stroke-width="1.2"/><path d="M9 2.3H10.8V7.7H7.2" fill="none" stroke="#cacaca" stroke-width="1.2"/></svg>
<div class="t" style="left:485.8px;top:618px;font-size:9.2px;line-height:10px;color:#c4c4c4;transform:scaleX(0.992);-webkit-text-stroke:0.15px #c4c4c4;">M</div>
<div class="t" style="left:503.3px;top:618px;font-size:9.2px;line-height:10px;color:#c4c4c4;transform:scaleX(0.913);-webkit-text-stroke:0.15px #c4c4c4;">S</div>
<svg style="left:519px;top:617px;" width="9" height="12" viewBox="0 0 9 12"><rect x="2.6" y="0" width="3.8" height="7" rx="1.9" fill="#8e8e8e"/><path d="M.8 4.5V5.6Q.8 8.6 4.5 8.6Q8.2 8.6 8.2 5.6V4.5" fill="none" stroke="#8e8e8e" stroke-width="1"/><path d="M4.5 8.6V11M2.2 11.3H6.8" stroke="#8e8e8e" stroke-width="1.1"/></svg>
<div style="left:436.5px;top:634px;width:28px;height:21.5px;background:#0b5a9b;"></div>
<svg style="left:423px;top:639px;" width="9" height="10" viewBox="0 0 9 10"><rect x="0" y="4.6" width="8.6" height="5.2" rx=".6" fill="#d2d2d2"/><path d="M1.6 4.6V2.8Q1.6 .7 3.8 .7Q5.7 .7 6 2.4" fill="none" stroke="#d2d2d2" stroke-width="1.4"/><rect x="3.3" y="6.3" width="2" height="1.6" fill="#585858"/></svg>
<div class="t" style="left:444.5px;top:639px;font-size:10.8px;line-height:12px;color:#f4f4f4;transform:scaleX(0.818);-webkit-text-stroke:0.15px #f4f4f4;">A2</div>
<svg style="left:468px;top:640.6px;" width="11.5" height="10" viewBox="0 0 11.5 10"><rect x=".6" y=".6" width="8.4" height="3.4" rx="1.2" fill="none" stroke="#cacaca" stroke-width="1.2"/><rect x=".6" y="6" width="6.6" height="3.4" rx="1.2" fill="none" stroke="#cacaca" stroke-width="1.2"/><path d="M9 2.3H10.8V7.7H7.2" fill="none" stroke="#cacaca" stroke-width="1.2"/></svg>
<div class="t" style="left:485.8px;top:640px;font-size:9.2px;line-height:10px;color:#c4c4c4;transform:scaleX(0.992);-webkit-text-stroke:0.15px #c4c4c4;">M</div>
<div class="t" style="left:503.3px;top:640px;font-size:9.2px;line-height:10px;color:#c4c4c4;transform:scaleX(0.913);-webkit-text-stroke:0.15px #c4c4c4;">S</div>
<svg style="left:519px;top:639px;" width="9" height="12" viewBox="0 0 9 12"><rect x="2.6" y="0" width="3.8" height="7" rx="1.9" fill="#8e8e8e"/><path d="M.8 4.5V5.6Q.8 8.6 4.5 8.6Q8.2 8.6 8.2 5.6V4.5" fill="none" stroke="#8e8e8e" stroke-width="1"/><path d="M4.5 8.6V11M2.2 11.3H6.8" stroke="#8e8e8e" stroke-width="1.1"/></svg>
<div style="left:436.5px;top:656px;width:28px;height:21.5px;background:#0b5a9b;"></div>
<svg style="left:423px;top:661px;" width="9" height="10" viewBox="0 0 9 10"><rect x="0" y="4.6" width="8.6" height="5.2" rx=".6" fill="#d2d2d2"/><path d="M1.6 4.6V2.8Q1.6 .7 3.8 .7Q5.7 .7 6 2.4" fill="none" stroke="#d2d2d2" stroke-width="1.4"/><rect x="3.3" y="6.3" width="2" height="1.6" fill="#585858"/></svg>
<div class="t" style="left:444.5px;top:661px;font-size:10.8px;line-height:12px;color:#f4f4f4;transform:scaleX(0.818);-webkit-text-stroke:0.15px #f4f4f4;">A3</div>
<svg style="left:468px;top:662.6px;" width="11.5" height="10" viewBox="0 0 11.5 10"><rect x=".6" y=".6" width="8.4" height="3.4" rx="1.2" fill="none" stroke="#cacaca" stroke-width="1.2"/><rect x=".6" y="6" width="6.6" height="3.4" rx="1.2" fill="none" stroke="#cacaca" stroke-width="1.2"/><path d="M9 2.3H10.8V7.7H7.2" fill="none" stroke="#cacaca" stroke-width="1.2"/></svg>
<div class="t" style="left:485.8px;top:662px;font-size:9.2px;line-height:10px;color:#c4c4c4;transform:scaleX(0.992);-webkit-text-stroke:0.15px #c4c4c4;">M</div>
<div class="t" style="left:503.3px;top:662px;font-size:9.2px;line-height:10px;color:#c4c4c4;transform:scaleX(0.913);-webkit-text-stroke:0.15px #c4c4c4;">S</div>
<svg style="left:519px;top:661px;" width="9" height="12" viewBox="0 0 9 12"><rect x="2.6" y="0" width="3.8" height="7" rx="1.9" fill="#8e8e8e"/><path d="M.8 4.5V5.6Q.8 8.6 4.5 8.6Q8.2 8.6 8.2 5.6V4.5" fill="none" stroke="#8e8e8e" stroke-width="1"/><path d="M4.5 8.6V11M2.2 11.3H6.8" stroke="#8e8e8e" stroke-width="1.1"/></svg>
<div style="left:390px;top:678px;width:162px;height:8px;overflow:hidden;">
<div style="left:46.5px;top:0px;width:28px;height:8px;background:#0b5a9b;"></div>
<svg style="left:33px;top:3.6px;" width="9" height="10" viewBox="0 0 9 10"><rect x="0" y="4.6" width="8.6" height="5.2" rx=".6" fill="#d2d2d2"/><path d="M1.6 4.6V2.8Q1.6 .7 3.8 .7Q5.7 .7 6 2.4" fill="none" stroke="#d2d2d2" stroke-width="1.4"/><rect x="3.3" y="6.3" width="2" height="1.6" fill="#585858"/></svg>
<svg style="left:78px;top:5.5px;" width="11.5" height="10" viewBox="0 0 11.5 10"><rect x=".6" y=".6" width="8.4" height="3.4" rx="1.2" fill="none" stroke="#cacaca" stroke-width="1.2"/><rect x=".6" y="6" width="6.6" height="3.4" rx="1.2" fill="none" stroke="#cacaca" stroke-width="1.2"/><path d="M9 2.3H10.8V7.7H7.2" fill="none" stroke="#cacaca" stroke-width="1.2"/></svg>
<svg style="left:129px;top:3px;" width="9" height="12" viewBox="0 0 9 12"><rect x="2.6" y="0" width="3.8" height="7" rx="1.9" fill="#8e8e8e"/><path d="M.8 4.5V5.6Q.8 8.6 4.5 8.6Q8.2 8.6 8.2 5.6V4.5" fill="none" stroke="#8e8e8e" stroke-width="1"/><path d="M4.5 8.6V11M2.2 11.3H6.8" stroke="#8e8e8e" stroke-width="1.1"/></svg>
<div class="t" style="left:95.8px;top:5px;font-size:9.2px;line-height:10px;color:#c0c0c0;transform:scaleX(0.992);-webkit-text-stroke:0.15px #c0c0c0;">M</div>
<div class="t" style="left:113.3px;top:5px;font-size:9.2px;line-height:10px;color:#c0c0c0;transform:scaleX(0.913);-webkit-text-stroke:0.15px #c0c0c0;">S</div>
</div>
<div class="t" style="left:674.7px;top:509px;font-size:10.8px;line-height:12px;color:#cfcfcf;transform:scaleX(0.929);-webkit-text-stroke:0.15px #cfcfcf;">00:00:05:00</div>
<div class="t" style="left:821.7px;top:509px;font-size:10.8px;line-height:12px;color:#cfcfcf;transform:scaleX(0.929);-webkit-text-stroke:0.15px #cfcfcf;">00:00:10:00</div>
<div style="left:551.5px;top:505px;width:29px;height:16px;overflow:hidden;">
<div class="t" style="left:-23.9px;top:4px;font-size:10.8px;line-height:12px;color:#cfcfcf;transform:scaleX(0.929);-webkit-text-stroke:0.15px #cfcfcf;">00:00:00:00</div>
</div>
<div style="left:969.5px;top:505px;width:31.5px;height:16px;overflow:hidden;">
<div class="t" style="left:0px;top:4px;font-size:10.8px;line-height:12px;color:#cfcfcf;transform:scaleX(0.929);-webkit-text-stroke:0.15px #cfcfcf;">00:00:15:00</div>
</div>
<svg style="left:553px;top:523px;" width="449" height="10" viewBox="0 0 449 10"><rect x="13.0" y="5.5" width="1" height="4" fill="#6e6e6e"/><rect x="27.8" y="5.5" width="1" height="4" fill="#6e6e6e"/><rect x="42.5" y="5.5" width="1" height="4" fill="#6e6e6e"/><rect x="57.3" y="5.5" width="1" height="4" fill="#6e6e6e"/><rect x="72.1" y="5.5" width="1" height="4" fill="#6e6e6e"/><rect x="86.9" y="5.5" width="1" height="4" fill="#6e6e6e"/><rect x="101.7" y="5.5" width="1" height="4" fill="#6e6e6e"/><rect x="116.4" y="5.5" width="1" height="4" fill="#6e6e6e"/><rect x="131.2" y="5.5" width="1" height="4" fill="#6e6e6e"/><rect x="146.0" y="0" width="1" height="9.5" fill="#7c7c7c"/><rect x="160.8" y="5.5" width="1" height="4" fill="#6e6e6e"/><rect x="175.6" y="5.5" width="1" height="4" fill="#6e6e6e"/><rect x="190.3" y="5.5" width="1" height="4" fill="#6e6e6e"/><rect x="205.1" y="5.5" width="1" height="4" fill="#6e6e6e"/><rect x="219.9" y="5.5" width="1" height="4" fill="#6e6e6e"/><rect x="234.7" y="5.5" width="1" height="4" fill="#6e6e6e"/><rect x="249.5" y="5.5" width="1" height="4" fill="#6e6e6e"/><rect x="264.2" y="5.5" width="1" height="4" fill="#6e6e6e"/><rect x="279.0" y="5.5" width="1" height="4" fill="#6e6e6e"/><rect x="293.8" y="0" width="1" height="9.5" fill="#7c7c7c"/><rect x="308.6" y="5.5" width="1" height="4" fill="#6e6e6e"/><rect x="323.4" y="5.5" width="1" height="4" fill="#6e6e6e"/><rect x="338.1" y="5.5" width="1" height="4" fill="#6e6e6e"/><rect x="352.9" y="5.5" width="1" height="4" fill="#6e6e6e"/><rect x="367.7" y="5.5" width="1" height="4" fill="#6e6e6e"/><rect x="382.5" y="5.5" width="1" height="4" fill="#6e6e6e"/><rect x="397.3" y="5.5" width="1" height="4" fill="#6e6e6e"/><rect x="412.0" y="5.5" width="1" height="4" fill="#6e6e6e"/><rect x="426.8" y="5.5" width="1" height="4" fill="#6e6e6e"/><rect x="441.6" y="0" width="1" height="9.5" fill="#7c7c7c"/></svg>
<div style="left:1001px;top:495px;width:1px;height:41px;background:#c4c4c4;"></div>
<div style="left:554px;top:532.2px;width:33px;height:3.8px;background:#d85438;"></div>
<div style="left:587px;top:532.2px;width:414.5px;height:3.8px;background:#ece03a;border-top:.6px solid #8a8420;border-bottom:.6px solid #8a8420;"></div>
<div style="left:554px;top:535.6px;width:448px;height:0.8px;background:#3c3c3c;"></div>
<div style="left:553px;top:586.5px;width:448.5px;height:21.5px;background:#6f9fd7;"></div>
<div style="left:554.3px;top:592.5px;width:32.3px;height:11.3px;background:#cbb684;border-top:1px solid #dcc898;background:linear-gradient(#d2bc88,#c2aa74);"></div>
<div style="left:554.5px;top:592.5px;width:32.5px;height:12px;overflow:hidden;">
<div class="t" style="left:2.2px;top:1px;font-size:11.4px;line-height:12px;color:#1c1608;transform:scaleX(0.802);-webkit-text-stroke:0.15px #1c1608;">Cube S</div>
</div>
<svg style="left:595.5px;top:589px;" width="11" height="10" viewBox="0 0 11 10"><rect x=".5" y=".5" width="10" height="9" fill="#e0e0e0" stroke="#181818" stroke-width="1"/><path d="M5.4 2.2Q4.2 1.6 3.9 3.2L3.1 7.4Q2.9 8.4 2 8" fill="none" stroke="#181818" stroke-width="1"/><path d="M2.6 4.2H5M5.6 4.6L8.6 8M8.6 4.6L5.6 8" stroke="#181818" stroke-width=".9"/></svg>
<div class="t" style="left:612.6px;top:588px;font-size:10.4px;line-height:11px;color:#14223c;transform:scaleX(0.911);-webkit-text-stroke:0.15px #14223c;">Fasle narges.mp4 [V]</div>
<div style="left:553px;top:612px;width:448.5px;height:21.5px;background:#3b4f69;"></div>
<svg style="left:561px;top:614.5px;" width="11" height="10" viewBox="0 0 11 10"><rect x=".5" y=".5" width="10" height="9" fill="#e0e0e0" stroke="#181818" stroke-width="1"/><path d="M5.4 2.2Q4.2 1.6 3.9 3.2L3.1 7.4Q2.9 8.4 2 8" fill="none" stroke="#181818" stroke-width="1"/><path d="M2.6 4.2H5M5.6 4.6L8.6 8M8.6 4.6L5.6 8" stroke="#181818" stroke-width=".9"/></svg>
<svg style="left:553px;top:612px;" width="448.5" height="21.5" viewBox="0 0 448.5 21.5"><path d="M0 21.5L1.0 20.7L2.0 20.8L3.0 20.4L4.0 20.9L5.0 20.5L6.0 20.7L7.0 20.9L8.0 20.5L9.0 20.9L10.0 20.6L11.0 20.9L12.0 20.9L13.0 20.6L14.0 20.3L15.0 20.9L16.0 20.8L17.0 20.5L18.0 20.2L19.0 20.5L20.0 20.6L21.0 20.2L22.0 20.9L23.0 20.3L24.0 20.7L25.0 19.0L26.0 20.9L27.0 20.7L28.0 20.3L29.0 20.8L30.0 20.5L31.0 20.4L32.0 20.7L33.0 20.5L34.0 20.9L35.0 20.9L36.0 20.8L37.0 20.4L38.0 20.6L39.0 20.7L40.0 10.0L41.0 15.5L42.0 20.7L43.0 18.5L44.0 20.4L45.0 20.8L46.0 20.5L47.0 20.5L48.0 20.3L49.0 20.4L50.0 20.7L51.0 20.2L52.0 20.9L53.0 19.5L54.0 20.3L55.0 20.8L56.0 20.6L57.0 20.9L58.0 20.4L59.0 20.3L60.0 20.5L61.0 20.3L62.0 20.7L63.0 20.4L64.0 20.5L65.0 20.5L66.0 20.6L67.0 20.3L68.0 20.2L69.0 20.6L70.0 20.4L71.0 20.9L72.0 20.4L73.0 20.4L74.0 20.2L75.0 20.3L76.0 20.7L77.0 20.6L78.0 20.4L79.0 19.0L80.0 20.6L81.0 20.8L82.0 20.9L83.0 20.9L84.0 20.3L85.0 20.9L86.0 20.8L87.0 20.6L88.0 20.3L89.0 20.9L90.0 20.6L91.0 20.5L92.0 20.2L93.0 20.3L94.0 20.3L95.0 20.7L96.0 20.6L97.0 19.7L98.0 20.2L99.0 20.2L100.0 20.8L101.0 20.8L102.0 20.8L103.0 20.8L104.0 20.6L105.0 20.5L106.0 20.7L107.0 21.0L108.0 20.6L109.0 20.7L110.0 20.5L111.0 20.2L112.0 20.4L113.0 18.0L114.0 20.5L115.0 20.4L116.0 20.9L117.0 20.2L118.0 20.3L119.0 20.3L120.0 20.3L121.0 20.6L122.0 20.6L123.0 20.9L124.0 20.4L125.0 20.9L126.0 20.9L127.0 20.8L128.0 20.8L129.0 20.7L130.0 20.9L131.0 21.0L132.0 20.8L133.0 20.9L134.0 20.7L135.0 20.9L136.0 20.3L137.0 20.5L138.0 20.8L139.0 20.8L140.0 20.7L141.0 20.7L142.0 20.9L143.0 20.3L144.0 20.2L145.0 20.6L146.0 20.6L147.0 20.9L148.0 20.9L149.0 20.7L150.0 20.7L151.0 20.3L152.0 20.8L153.0 20.9L154.0 20.2L155.0 20.5L156.0 20.8L157.0 20.5L158.0 20.9L159.0 20.5L160.0 20.2L161.0 20.3L162.0 19.0L163.0 20.7L164.0 20.7L165.0 20.8L166.0 20.3L167.0 20.5L168.0 20.3L169.0 20.7L170.0 20.8L171.0 20.3L172.0 20.2L173.0 13.2L174.0 13.1L175.0 12.7L176.0 12.8L177.0 14.9L178.0 13.3L179.0 13.9L180.0 15.3L181.0 15.2L182.0 13.6L183.0 13.5L184.0 10.8L185.0 9.0L186.0 11.7L187.0 9.0L188.0 8.7L189.0 8.9L190.0 12.4L191.0 13.3L192.0 13.2L193.0 13.4L194.0 13.4L195.0 10.9L196.0 9.2L197.0 9.6L198.0 11.7L199.0 14.0L200.0 13.4L201.0 16.3L202.0 14.0L203.0 12.9L204.0 13.4L205.0 13.6L206.0 14.7L207.0 16.0L208.0 13.4L209.0 15.3L210.0 13.4L211.0 12.7L212.0 15.1L213.0 15.0L214.0 12.8L215.0 13.7L216.0 16.0L217.0 17.5L218.0 17.5L219.0 15.4L220.0 15.9L221.0 17.9L222.0 16.1L223.0 15.9L224.0 16.9L225.0 17.8L226.0 17.4L227.0 18.5L228.0 18.9L229.0 16.9L230.0 17.8L231.0 18.2L232.0 17.5L233.0 14.9L234.0 13.1L235.0 13.3L236.0 20.3L237.0 20.3L238.0 20.2L239.0 20.3L240.0 19.8L241.0 20.2L242.0 20.0L243.0 20.4L244.0 19.4L245.0 20.1L246.0 20.0L247.0 19.8L248.0 19.4L249.0 18.2L250.0 17.2L251.0 18.1L252.0 18.0L253.0 18.0L254.0 19.1L255.0 19.9L256.0 20.3L257.0 20.5L258.0 19.4L259.0 20.3L260.0 19.9L261.0 19.5L262.0 19.7L263.0 20.1L264.0 19.8L265.0 19.7L266.0 19.4L267.0 20.4L268.0 19.7L269.0 20.2L270.0 20.1L271.0 19.4L272.0 19.8L273.0 19.7L274.0 19.4L275.0 19.2L276.0 19.9L277.0 19.7L278.0 19.8L279.0 19.8L280.0 19.5L281.0 19.9L282.0 19.8L283.0 19.9L284.0 19.2L285.0 19.5L286.0 19.3L287.0 19.2L288.0 15.6L289.0 14.4L290.0 12.8L291.0 13.2L292.0 20.4L293.0 20.4L294.0 20.0L295.0 20.5L296.0 20.3L297.0 20.5L298.0 19.7L299.0 19.5L300.0 12.4L301.0 15.7L302.0 13.2L303.0 13.5L304.0 15.8L305.0 12.5L306.0 12.1L307.0 15.4L308.0 12.2L309.0 14.6L310.0 14.2L311.0 12.0L312.0 12.7L313.0 15.7L314.0 14.5L315.0 14.1L316.0 14.9L317.0 15.5L318.0 15.0L319.0 13.2L320.0 16.3L321.0 14.0L322.0 14.5L323.0 16.3L324.0 14.9L325.0 13.6L326.0 14.1L327.0 16.1L328.0 12.0L329.0 12.9L330.0 12.1L331.0 15.9L332.0 15.2L333.0 16.2L334.0 13.0L335.0 15.2L336.0 15.8L337.0 14.5L338.0 12.4L339.0 12.8L340.0 15.3L341.0 15.7L342.0 12.3L343.0 13.9L344.0 13.3L345.0 16.0L346.0 16.1L347.0 17.8L348.0 18.6L349.0 19.5L350.0 17.2L351.0 18.0L352.0 9.8L353.0 14.1L354.0 9.5L355.0 14.2L356.0 9.4L357.0 11.9L358.0 12.6L359.0 11.3L360.0 9.1L361.0 13.0L362.0 13.8L363.0 11.4L364.0 13.2L365.0 13.9L366.0 13.6L367.0 14.3L368.0 13.4L369.0 12.7L370.0 12.8L371.0 10.1L372.0 15.1L373.0 14.2L374.0 15.6L375.0 14.9L376.0 16.3L377.0 15.3L378.0 16.3L379.0 13.2L380.0 14.0L381.0 15.6L382.0 14.3L383.0 12.3L384.0 15.9L385.0 12.8L386.0 14.5L387.0 14.2L388.0 12.7L389.0 14.7L390.0 14.2L391.0 13.4L392.0 12.1L393.0 14.9L394.0 12.7L395.0 13.3L396.0 13.6L397.0 14.6L398.0 14.9L399.0 16.2L400.0 15.8L401.0 16.1L402.0 13.1L403.0 15.3L404.0 16.4L405.0 17.2L406.0 15.5L407.0 16.3L408.0 17.6L409.0 19.1L410.0 19.6L411.0 20.5L412.0 20.3L413.0 20.6L414.0 20.3L415.0 20.5L416.0 19.7L417.0 19.7L418.0 20.2L419.0 20.5L420.0 19.7L421.0 20.4L422.0 20.4L423.0 20.8L424.0 20.4L425.0 20.3L426.0 20.2L427.0 20.6L428.0 20.2L429.0 20.8L430.0 20.5L431.0 20.7L432.0 20.3L433.0 20.7L434.0 20.8L435.0 20.5L436.0 20.5L437.0 20.1L438.0 12.3L439.0 11.1L440.0 11.6L441.0 11.3L442.0 10.4L443.0 13.1L444.0 13.4L445.0 9.8L446.0 14.4L447.0 11.2L448.0 11.7L448.5 21.5Z" fill="#6f9fd7"/></svg>
<div style="left:551.2px;top:536px;width:3.5px;height:150px;background:#40505c;"></div>
<div style="left:551.9px;top:531px;width:2.3px;height:155px;background:#58b0e0;"></div>
<svg style="left:551.7px;top:522px;" width="7" height="9" viewBox="0 0 7 9"><path d="M0 .8Q0 0 .8 0H5.6Q6.4 0 6.4 .8V6L3.2 8.6L0 6Z" fill="#44b6f6"/></svg>
<div style="left:552px;top:531.2px;width:1.2px;height:1.6px;background:#0a0a0a;"></div>
<div style="left:1002px;top:536px;width:13px;height:150px;background:#595959;"></div>
<div style="left:1002px;top:536px;width:13px;height:1.2px;background:#3e3e3e;"></div>
<div style="left:1003px;top:537.7px;width:11.6px;height:12px;background:#676767;"></div>
<div style="left:1003px;top:596px;width:11.6px;height:11.5px;background:#646464;"></div>
<div style="left:1003px;top:612.5px;width:11.6px;height:12.5px;background:#646464;"></div>
<div style="left:1002px;top:608.5px;width:13px;height:2.5px;background:#4c4c4c;"></div>
<div style="left:1003px;top:673px;width:11.6px;height:13px;background:#696969;"></div>
<div style="left:390px;top:686px;width:625px;height:14px;background:#464646;"></div>
<div style="left:390.5px;top:686px;width:13.5px;height:14px;background:#6c6c6c;"></div>
<div style="left:404px;top:686px;width:63px;height:14px;background:#5f5f5f;"></div>
<div style="left:467px;top:686px;width:13px;height:14px;background:#707070;"></div>
<div style="left:1019px;top:471px;width:63px;height:229px;background:#585858;"></div>
<div style="left:1022px;top:485.5px;width:36px;height:194px;background:#1a1a1a;border:1px solid #3a3a3a;"></div>
<div style="left:1023px;top:493px;width:34px;height:1px;background:#3a3a3a;"></div>
<div style="left:1039.5px;top:486px;width:1px;height:8px;background:#3a3a3a;"></div>
<div style="left:1023px;top:676px;width:16px;height:2px;background:#a89a2c;"></div>
<div style="left:1041px;top:676px;width:16px;height:2px;background:#a89a2c;"></div>
<svg style="left:1058px;top:490px;" width="4" height="190" viewBox="0 0 4 190"><rect x="0" y="7.4" width="2" height="1" fill="#b8b8b8"/><rect x="0" y="9.2" width="2" height="1" fill="#b8b8b8"/><rect x="0" y="11.0" width="2" height="1" fill="#b8b8b8"/><rect x="0" y="12.9" width="2" height="1" fill="#b8b8b8"/><rect x="0" y="14.7" width="2" height="1" fill="#b8b8b8"/><rect x="0" y="18.3" width="2" height="1" fill="#b8b8b8"/><rect x="0" y="20.1" width="2" height="1" fill="#b8b8b8"/><rect x="0" y="21.9" width="2" height="1" fill="#b8b8b8"/><rect x="0" y="23.8" width="2" height="1" fill="#b8b8b8"/><rect x="0" y="25.6" width="2" height="1" fill="#b8b8b8"/><rect x="0" y="29.2" width="2" height="1" fill="#b8b8b8"/><rect x="0" y="31.0" width="2" height="1" fill="#b8b8b8"/><rect x="0" y="32.8" width="2" height="1" fill="#b8b8b8"/><rect x="0" y="34.6" width="2" height="1" fill="#b8b8b8"/><rect x="0" y="36.5" width="2" height="1" fill="#b8b8b8"/><rect x="0" y="40.1" width="2" height="1" fill="#b8b8b8"/><rect x="0" y="41.9" width="2" height="1" fill="#b8b8b8"/><rect x="0" y="43.7" width="2" height="1" fill="#b8b8b8"/><rect x="0" y="45.5" width="2" height="1" fill="#b8b8b8"/><rect x="0" y="47.3" width="2" height="1" fill="#b8b8b8"/><rect x="0" y="51.0" width="2" height="1" fill="#b8b8b8"/><rect x="0" y="52.8" width="2" height="1" fill="#b8b8b8"/><rect x="0" y="54.6" width="2" height="1" fill="#b8b8b8"/><rect x="0" y="56.4" width="2" height="1" fill="#b8b8b8"/><rect x="0" y="58.2" width="2" height="1" fill="#b8b8b8"/><rect x="0" y="61.9" width="2" height="1" fill="#b8b8b8"/><rect x="0" y="63.7" width="2" height="1" fill="#b8b8b8"/><rect x="0" y="65.5" width="2" height="1" fill="#b8b8b8"/><rect x="0" y="67.3" width="2" height="1" fill="#b8b8b8"/><rect x="0" y="69.1" width="2" height="1" fill="#b8b8b8"/><rect x="0" y="72.8" width="2" height="1" fill="#b8b8b8"/><rect x="0" y="74.6" width="2" height="1" fill="#b8b8b8"/><rect x="0" y="76.4" width="2" height="1" fill="#b8b8b8"/><rect x="0" y="78.2" width="2" height="1" fill="#b8b8b8"/><rect x="0" y="80.0" width="2" height="1" fill="#b8b8b8"/><rect x="0" y="83.6" width="2" height="1" fill="#b8b8b8"/><rect x="0" y="85.5" width="2" height="1" fill="#b8b8b8"/><rect x="0" y="87.3" width="2" height="1" fill="#b8b8b8"/><rect x="0" y="89.1" width="2" height="1" fill="#b8b8b8"/><rect x="0" y="90.9" width="2" height="1" fill="#b8b8b8"/><rect x="0" y="94.5" width="2" height="1" fill="#b8b8b8"/><rect x="0" y="96.4" width="2" height="1" fill="#b8b8b8"/><rect x="0" y="98.2" width="2" height="1" fill="#b8b8b8"/><rect x="0" y="100.0" width="2" height="1" fill="#b8b8b8"/><rect x="0" y="101.8" width="2" height="1" fill="#b8b8b8"/><rect x="0" y="105.4" width="2" height="1" fill="#b8b8b8"/><rect x="0" y="107.2" width="2" height="1" fill="#b8b8b8"/><rect x="0" y="109.1" width="2" height="1" fill="#b8b8b8"/><rect x="0" y="110.9" width="2" height="1" fill="#b8b8b8"/><rect x="0" y="112.7" width="2" height="1" fill="#b8b8b8"/><rect x="0" y="116.3" width="2" height="1" fill="#b8b8b8"/><rect x="0" y="118.1" width="2" height="1" fill="#b8b8b8"/><rect x="0" y="119.9" width="2" height="1" fill="#b8b8b8"/><rect x="0" y="121.8" width="2" height="1" fill="#b8b8b8"/><rect x="0" y="123.6" width="2" height="1" fill="#b8b8b8"/><rect x="0" y="127.2" width="2" height="1" fill="#b8b8b8"/><rect x="0" y="129.0" width="2" height="1" fill="#b8b8b8"/><rect x="0" y="130.8" width="2" height="1" fill="#b8b8b8"/><rect x="0" y="132.6" width="2" height="1" fill="#b8b8b8"/><rect x="0" y="134.5" width="2" height="1" fill="#b8b8b8"/><rect x="0" y="138.1" width="2" height="1" fill="#b8b8b8"/><rect x="0" y="139.9" width="2" height="1" fill="#b8b8b8"/><rect x="0" y="141.7" width="2" height="1" fill="#b8b8b8"/><rect x="0" y="143.5" width="2" height="1" fill="#b8b8b8"/><rect x="0" y="145.4" width="2" height="1" fill="#b8b8b8"/><rect x="0" y="149.0" width="2" height="1" fill="#b8b8b8"/><rect x="0" y="150.8" width="2" height="1" fill="#b8b8b8"/><rect x="0" y="152.6" width="2" height="1" fill="#b8b8b8"/><rect x="0" y="154.4" width="2" height="1" fill="#b8b8b8"/><rect x="0" y="156.2" width="2" height="1" fill="#b8b8b8"/><rect x="0" y="159.9" width="2" height="1" fill="#b8b8b8"/><rect x="0" y="161.7" width="2" height="1" fill="#b8b8b8"/><rect x="0" y="163.5" width="2" height="1" fill="#b8b8b8"/><rect x="0" y="165.3" width="2" height="1" fill="#b8b8b8"/><rect x="0" y="167.1" width="2" height="1" fill="#b8b8b8"/><rect x="0" y="170.8" width="2" height="1" fill="#b8b8b8"/><rect x="0" y="172.6" width="2" height="1" fill="#b8b8b8"/><rect x="0" y="174.4" width="2" height="1" fill="#b8b8b8"/><rect x="0" y="176.2" width="2" height="1" fill="#b8b8b8"/><rect x="0" y="178.0" width="2" height="1" fill="#b8b8b8"/><rect x="0" y="181.7" width="2" height="1" fill="#b8b8b8"/><rect x="0" y="183.5" width="2" height="1" fill="#b8b8b8"/><rect x="0" y="185.3" width="2" height="1" fill="#b8b8b8"/><rect x="0" y="187.1" width="2" height="1" fill="#b8b8b8"/></svg>
<div style="left:1058.3px;top:495px;width:3.4px;height:1px;background:#c8c8c8;"></div>
<div class="t" style="left:1064px;top:490px;font-size:8.6px;line-height:10px;color:#c8c8c8;transform:scaleX(0.95);-webkit-text-stroke:0.15px #c8c8c8;">0</div>
<div style="left:1058.3px;top:513px;width:3.4px;height:1px;background:#c8c8c8;"></div>
<div class="t" style="left:1064px;top:508px;font-size:8.6px;line-height:10px;color:#c8c8c8;transform:scaleX(0.95);-webkit-text-stroke:0.15px #c8c8c8;">-6</div>
<div style="left:1058.3px;top:531px;width:3.4px;height:1px;background:#c8c8c8;"></div>
<div class="t" style="left:1064px;top:527px;font-size:8.6px;line-height:10px;color:#c8c8c8;transform:scaleX(0.95);-webkit-text-stroke:0.15px #c8c8c8;">-12</div>
<div style="left:1058.3px;top:549px;width:3.4px;height:1px;background:#c8c8c8;"></div>
<div class="t" style="left:1064px;top:545px;font-size:8.6px;line-height:10px;color:#c8c8c8;transform:scaleX(0.95);-webkit-text-stroke:0.15px #c8c8c8;">-18</div>
<div style="left:1058.3px;top:567px;width:3.4px;height:1px;background:#c8c8c8;"></div>
<div class="t" style="left:1064px;top:563px;font-size:8.6px;line-height:10px;color:#c8c8c8;transform:scaleX(0.95);-webkit-text-stroke:0.15px #c8c8c8;">-24</div>
<div style="left:1058.3px;top:585px;width:3.4px;height:1px;background:#c8c8c8;"></div>
<div class="t" style="left:1064px;top:581px;font-size:8.6px;line-height:10px;color:#c8c8c8;transform:scaleX(0.95);-webkit-text-stroke:0.15px #c8c8c8;">-30</div>
<div style="left:1058.3px;top:603px;width:3.4px;height:1px;background:#c8c8c8;"></div>
<div class="t" style="left:1064px;top:599px;font-size:8.6px;line-height:10px;color:#c8c8c8;transform:scaleX(0.95);-webkit-text-stroke:0.15px #c8c8c8;">-36</div>
<div style="left:1058.3px;top:622px;width:3.4px;height:1px;background:#c8c8c8;"></div>
<div class="t" style="left:1064px;top:617px;font-size:8.6px;line-height:10px;color:#c8c8c8;transform:scaleX(0.95);-webkit-text-stroke:0.15px #c8c8c8;">-42</div>
<div style="left:1058.3px;top:640px;width:3.4px;height:1px;background:#c8c8c8;"></div>
<div class="t" style="left:1064px;top:636px;font-size:8.6px;line-height:10px;color:#c8c8c8;transform:scaleX(0.95);-webkit-text-stroke:0.15px #c8c8c8;">-48</div>
<div style="left:1058.3px;top:658px;width:3.4px;height:1px;background:#c8c8c8;"></div>
<div class="t" style="left:1064px;top:654px;font-size:8.6px;line-height:10px;color:#c8c8c8;transform:scaleX(0.95);-webkit-text-stroke:0.15px #c8c8c8;">-54</div>
<div class="t" style="left:1064px;top:672px;font-size:8.6px;line-height:10px;color:#c8c8c8;transform:scaleX(0.95);-webkit-text-stroke:0.15px #c8c8c8;">dB</div>
<div style="left:1023px;top:682.3px;width:15px;height:13.5px;background:#4a4a4a;border:1px solid #3c3c3c;"></div>
<div style="left:1040px;top:682.3px;width:15px;height:13.5px;background:#4a4a4a;border:1px solid #3c3c3c;"></div>
<div class="t" style="left:1027.7px;top:684px;font-size:8.6px;line-height:10px;color:#d0d0d0;-webkit-text-stroke:0.15px #d0d0d0;">S</div>
<div class="t" style="left:1044.7px;top:684px;font-size:8.6px;line-height:10px;color:#d0d0d0;-webkit-text-stroke:0.15px #d0d0d0;">S</div>
<div style="left:0px;top:700px;width:1280px;height:2px;background:#222222;"></div>
<div style="left:0px;top:702px;width:1280px;height:16px;background:#585858;"></div>
<div style="left:0px;top:718px;width:1280px;height:2px;background:#222222;"></div>
<div style="left:453.1px;top:666.6px;width:56.4px;height:56.4px;border:5px solid rgba(32,162,54,.88);border-radius:50%;"></div>
<svg style="left:480.7px;top:694.2px;" width="10" height="15" viewBox="0 0 10 15"><path d="M1 1V11.6L3.6 9.3L5.4 13.4L7.2 12.6L5.4 8.6L8.8 8.4Z" fill="#ffffff" stroke="#3a3a3a" stroke-width=".7" stroke-linejoin="round"/></svg>
<div style="left:994px;top:30px;width:286px;height:51px;background:#6e6e6e;border:1px solid #9a9a9a;border-right:none;"></div>
<div style="left:995px;top:31px;width:42.5px;height:49px;background:none;background:linear-gradient(#6f6f6f,#8c8c8c);"></div>
<div style="left:1003.5px;top:43px;width:24.5px;height:24.5px;background:#f4a8b0;border-radius:2px;filter:blur(.8px);"></div>
<div style="left:1005.5px;top:44.7px;width:21px;height:20.8px;background:#e81224;"></div>
<div style="left:1037.5px;top:31px;width:1px;height:49px;background:#a0a0a0;"></div>
<div style="left:1038.5px;top:31px;width:24px;height:24.5px;background:none;background:linear-gradient(#747474,#888888);"></div>
<div style="left:1038.5px;top:56px;width:24px;height:24px;background:none;background:linear-gradient(#747474,#888888);"></div>
<div style="left:1038.5px;top:55.2px;width:24px;height:1px;background:#9c9c9c;"></div>
<svg style="left:1040px;top:32.5px;" width="20" height="18" viewBox="0 0 18 16"><path d="M1 4.5Q1 3.5 2 3.5H4.5L6 1H11.5L13 3.5H16Q17 3.5 17 4.5V13.5Q17 14.5 16 14.5H2Q1 14.5 1 13.5Z" fill="#3a4e80" stroke="#c8d4f0" stroke-width=".8"/><circle cx="9" cy="8.8" r="4.2" fill="#7a90d8" stroke="#d0d8f0" stroke-width=".8"/><circle cx="9" cy="8.8" r="2" fill="#4a5eb0"/><circle cx="15" cy="5.4" r=".8" fill="#f0d060"/></svg>
<svg style="left:1043.5px;top:60.5px;" width="14" height="15" viewBox="0 0 14 15"><rect x=".2" y=".2" width="13.6" height="14.6" rx="1" fill="#e8f2fc" opacity=".85"/><rect x="1" y="1" width="4.6" height="13" fill="#3a80c4"/><rect x="8.4" y="1" width="4.6" height="13" fill="#3a80c4"/></svg>
<div style="left:1062.5px;top:30.5px;width:70px;height:50px;background:#000000;"></div>
<svg style="left:1065.9px;top:47.9px;filter:blur(.3px);" width="64" height="15" viewBox="0 0 64 15"><path d="M2.3 0H7.299999999999999" stroke="#5cae5c" stroke-width="1.15" stroke-linecap="round" fill="none"/><path d="M8.899999999999999 1.6V6.3999999999999995" stroke="#5cae5c" stroke-width="1.15" stroke-linecap="round" fill="none"/><path d="M8.899999999999999 8.2V13.0" stroke="#5cae5c" stroke-width="1.15" stroke-linecap="round" fill="none"/><path d="M2.3 14.6H7.299999999999999" stroke="#5cae5c" stroke-width="1.15" stroke-linecap="round" fill="none"/><path d="M0.7 8.2V13.0" stroke="#5cae5c" stroke-width="1.15" stroke-linecap="round" fill="none"/><path d="M0.7 1.6V6.3999999999999995" stroke="#5cae5c" stroke-width="1.15" stroke-linecap="round" fill="none"/><path d="M7.299999999999999 1.8L5.2 6.3M4.3999999999999995 8.3L2.3 12.799999999999999" stroke="#5cae5c" stroke-width="1.15" stroke-linecap="round" fill="none"/><path d="M11.999999999999998 0H16.999999999999996" stroke="#5cae5c" stroke-width="1.15" stroke-linecap="round" fill="none"/><path d="M18.599999999999998 1.6V6.3999999999999995" stroke="#5cae5c" stroke-width="1.15" stroke-linecap="round" fill="none"/><path d="M18.599999999999998 8.2V13.0" stroke="#5cae5c" stroke-width="1.15" stroke-linecap="round" fill="none"/><path d="M11.999999999999998 14.6H16.999999999999996" stroke="#5cae5c" stroke-width="1.15" stroke-linecap="round" fill="none"/><path d="M10.399999999999999 8.2V13.0" stroke="#5cae5c" stroke-width="1.15" stroke-linecap="round" fill="none"/><path d="M10.399999999999999 1.6V6.3999999999999995" stroke="#5cae5c" stroke-width="1.15" stroke-linecap="round" fill="none"/><path d="M16.999999999999996 1.8L14.899999999999999 6.3M14.099999999999998 8.3L11.999999999999998 12.799999999999999" stroke="#5cae5c" stroke-width="1.15" stroke-linecap="round" fill="none"/><path d="M24.2 0H29.199999999999996" stroke="#5cae5c" stroke-width="1.15" stroke-linecap="round" fill="none"/><path d="M30.799999999999997 1.6V6.3999999999999995" stroke="#5cae5c" stroke-width="1.15" stroke-linecap="round" fill="none"/><path d="M30.799999999999997 8.2V13.0" stroke="#5cae5c" stroke-width="1.15" stroke-linecap="round" fill="none"/><path d="M24.2 14.6H29.199999999999996" stroke="#5cae5c" stroke-width="1.15" stroke-linecap="round" fill="none"/><path d="M22.599999999999998 8.2V13.0" stroke="#5cae5c" stroke-width="1.15" stroke-linecap="round" fill="none"/><path d="M22.599999999999998 1.6V6.3999999999999995" stroke="#5cae5c" stroke-width="1.15" stroke-linecap="round" fill="none"/><path d="M29.199999999999996 1.8L27.099999999999994 6.3M26.299999999999997 8.3L24.2 12.799999999999999" stroke="#5cae5c" stroke-width="1.15" stroke-linecap="round" fill="none"/><path d="M33.900000000000006 0H38.9" stroke="#5cae5c" stroke-width="1.15" stroke-linecap="round" fill="none"/><path d="M40.5 1.6V6.3999999999999995" stroke="#5cae5c" stroke-width="1.15" stroke-linecap="round" fill="none"/><path d="M40.5 8.2V13.0" stroke="#5cae5c" stroke-width="1.15" stroke-linecap="round" fill="none"/><path d="M33.900000000000006 14.6H38.9" stroke="#5cae5c" stroke-width="1.15" stroke-linecap="round" fill="none"/><path d="M32.300000000000004 8.2V13.0" stroke="#5cae5c" stroke-width="1.15" stroke-linecap="round" fill="none"/><path d="M32.300000000000004 1.6V6.3999999999999995" stroke="#5cae5c" stroke-width="1.15" stroke-linecap="round" fill="none"/><path d="M38.9 1.8L36.800000000000004 6.3M36.00000000000001 8.3L33.900000000000006 12.799999999999999" stroke="#5cae5c" stroke-width="1.15" stroke-linecap="round" fill="none"/><path d="M45.800000000000004 0H50.800000000000004" stroke="#5cae5c" stroke-width="1.15" stroke-linecap="round" fill="none"/><path d="M52.400000000000006 1.6V6.3999999999999995" stroke="#5cae5c" stroke-width="1.15" stroke-linecap="round" fill="none"/><path d="M52.400000000000006 8.2V13.0" stroke="#5cae5c" stroke-width="1.15" stroke-linecap="round" fill="none"/><path d="M45.800000000000004 14.6H50.800000000000004" stroke="#5cae5c" stroke-width="1.15" stroke-linecap="round" fill="none"/><path d="M44.2 8.2V13.0" stroke="#5cae5c" stroke-width="1.15" stroke-linecap="round" fill="none"/><path d="M44.2 1.6V6.3999999999999995" stroke="#5cae5c" stroke-width="1.15" stroke-linecap="round" fill="none"/><path d="M50.800000000000004 1.8L48.7 6.3M47.900000000000006 8.3L45.800000000000004 12.799999999999999" stroke="#5cae5c" stroke-width="1.15" stroke-linecap="round" fill="none"/><path d="M56.400000000000006 0H61.4" stroke="#5cae5c" stroke-width="1.15" stroke-linecap="round" fill="none"/><path d="M54.800000000000004 1.6V6.3999999999999995" stroke="#5cae5c" stroke-width="1.15" stroke-linecap="round" fill="none"/><path d="M56.2 7.3H61.6" stroke="#5cae5c" stroke-width="1.15" stroke-linecap="round" fill="none"/><path d="M63.0 8.2V13.0" stroke="#5cae5c" stroke-width="1.15" stroke-linecap="round" fill="none"/><path d="M56.400000000000006 14.6H61.4" stroke="#5cae5c" stroke-width="1.15" stroke-linecap="round" fill="none"/><rect x="20.2" y="5.6" width="1.4" height="1.6" fill="#66ba66"/><rect x="20.2" y="12.6" width="1.4" height="1.6" fill="#66ba66"/><rect x="41.699999999999996" y="5.6" width="1.4" height="1.6" fill="#66ba66"/><rect x="41.699999999999996" y="12.6" width="1.4" height="1.6" fill="#66ba66"/></svg>
<div style="left:1132.5px;top:31px;width:101.5px;height:24.5px;background:none;background:linear-gradient(#848484,#6a6a6a);"></div>
<div class="t" style="left:1150.6px;top:36px;font-size:13.2px;line-height:15px;color:#ffffff;transform:scaleX(0.971);font-weight:bold;font-family:'Liberation Serif',serif;text-shadow:0 0 2px #000,0 0 2px #000,1px 1px 1px #000;">1920 × 1027</div>
<div style="left:1234px;top:31px;width:24.5px;height:24.5px;background:none;background:linear-gradient(#dcdcdc,#bdbdbd);"></div>
<div style="left:1238.5px;top:37.5px;width:15px;height:12px;background:#c4c4c4;border:2px solid #3fae55;"></div>
<div style="left:1258.5px;top:31px;width:21.5px;height:24.5px;background:none;background:linear-gradient(#848484,#6a6a6a);"></div>
<div style="left:1265.5px;top:44.6px;width:15px;height:3.4px;background:#5a9ada;border-radius:1.5px;box-shadow:0 0 1.5px #dfeaff;"></div>
<div style="left:1132.5px;top:55.2px;width:148px;height:1px;background:#9c9c9c;"></div>
<div style="left:1133px;top:56.2px;width:24.5px;height:24px;background:none;background:linear-gradient(#eaeaea,#c2c2c2);"></div>
<div style="left:1157.5px;top:56.2px;width:1px;height:24px;background:#9a9a9a;"></div>
<div style="left:1158.5px;top:56.2px;width:24.5px;height:24px;background:none;background:linear-gradient(#eaeaea,#c2c2c2);"></div>
<div style="left:1183.0px;top:56.2px;width:1px;height:24px;background:#9a9a9a;"></div>
<div style="left:1184px;top:56.2px;width:24px;height:24px;background:none;background:linear-gradient(#747474,#8a8a8a);"></div>
<div style="left:1208px;top:56.2px;width:1px;height:24px;background:#9a9a9a;"></div>
<div style="left:1209px;top:56.2px;width:24.5px;height:24px;background:none;background:linear-gradient(#eaeaea,#c2c2c2);"></div>
<div style="left:1233.5px;top:56.2px;width:1px;height:24px;background:#9a9a9a;"></div>
<div style="left:1234.5px;top:56.2px;width:24px;height:24px;background:none;background:linear-gradient(#747474,#8a8a8a);"></div>
<div style="left:1258.5px;top:56.2px;width:1px;height:24px;background:#9a9a9a;"></div>
<div style="left:1259.5px;top:56.2px;width:20.5px;height:24px;background:none;background:linear-gradient(#747474,#8a8a8a);"></div>
<div style="left:1280.0px;top:56.2px;width:1px;height:24px;background:#9a9a9a;"></div>
<svg style="left:1136.5px;top:60px;" width="19" height="16" viewBox="0 0 19 16"><path d="M1 5.5H4L8.4 1.6V14.4L4 10.5H1Z" fill="#8ab4e0" stroke="#3a78b8" stroke-width="1"/><path d="M10.5 4.6Q12.6 8 10.5 11.4M12.8 2.6Q16.2 8 12.8 13.4" fill="none" stroke="#3a78b8" stroke-width="1.7"/><path d="M15 1Q19.4 8 15 15" fill="none" stroke="#5a98d0" stroke-width="1.3"/></svg>
<svg style="left:1164.5px;top:59px;" width="12" height="18" viewBox="0 0 12 18"><rect x="3" y=".6" width="6" height="10.4" rx="3" fill="#8ab4e0" stroke="#3a78b8" stroke-width="1"/><path d="M4 3.5H8M4 5.5H8M4 7.5H8" stroke="#3a78b8" stroke-width=".8"/><path d="M1 7.5V9Q1 13.4 6 13.4Q11 13.4 11 9V7.5" fill="none" stroke="#4a88c4" stroke-width="1.2"/><path d="M6 13.4V16M3 16.6H9" stroke="#4a88c4" stroke-width="1.4"/></svg>
<svg style="left:1188px;top:59px;" width="16" height="18" viewBox="0 0 16 18"><circle cx="8" cy="7.4" r="6.4" fill="#9abce0" stroke="#c8dcf4" stroke-width="1.2"/><circle cx="8" cy="7.4" r="3.6" fill="#3a78c0"/><circle cx="8" cy="7.4" r="1.6" fill="#78b0e8"/><path d="M3.4 14.2Q8 11.8 12.6 14.2L13.6 16.8H2.4Z" fill="#8ab0dc"/></svg>
<svg style="left:1216.5px;top:59.5px;" width="12" height="18" viewBox="0 0 12 18"><path d="M1 1V13.6L4 10.8L6.2 15.8L8.2 14.9L6 10L10.2 9.8Z" fill="#ffffff" stroke="#101010" stroke-width="1.3" stroke-linejoin="round"/></svg>
<svg style="left:1237px;top:58.5px;" width="19" height="19" viewBox="0 0 19 19"><g transform="rotate(45 9.5 9.5)"><rect x="6.6" y="-1" width="6" height="13.5" rx="1" fill="#2e8ad4"/><path d="M6.6 12.5H12.6L9.6 18.4Z" fill="#f0d8b0"/><path d="M8.7 16.6L9.6 18.4L10.5 16.6Z" fill="#404040"/></g></svg>
<svg style="left:1263px;top:60.5px;" width="18" height="15" viewBox="0 0 18 15"><path d="M0 1.6Q0 .6 1 .6H5.6L7 2.4H15Q16 2.4 16 3.4V5H3.4L0 13.4Z" fill="#e8b828"/><path d="M3.6 5.4H18L15 14H0.4Z" fill="#f6d048"/></svg>
<div style="left:994px;top:80.5px;width:286px;height:1px;background:#4a4a4a;"></div>
</body>
</html>
